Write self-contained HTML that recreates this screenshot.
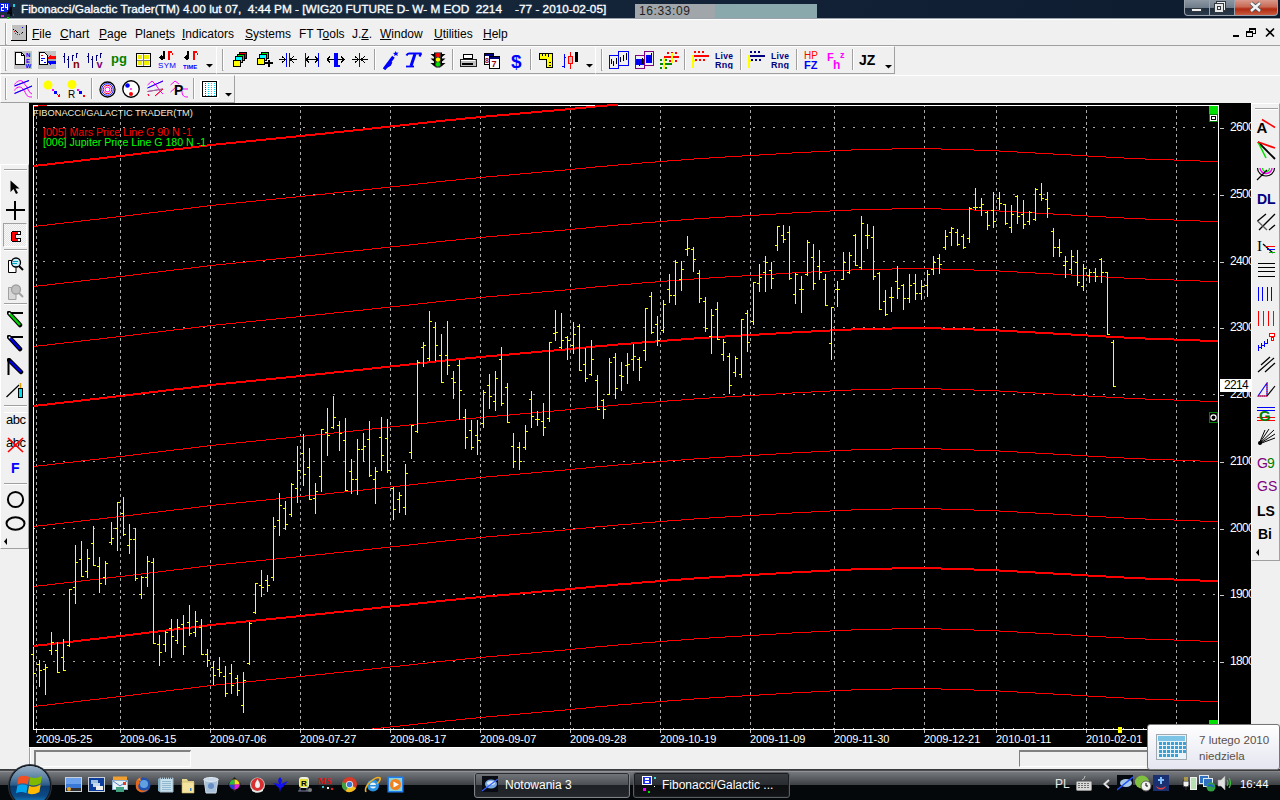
<!DOCTYPE html>
<html><head><meta charset="utf-8">
<style>
*{margin:0;padding:0;box-sizing:border-box}
html,body{width:1280px;height:800px;overflow:hidden;background:#f0f0f0;font-family:"Liberation Sans",sans-serif;position:relative}
.a{position:absolute}
#title{left:0;top:0;width:1280px;height:19px;background:linear-gradient(100deg,#1c2c3e 0%,#182839 28%,#142438 48%,#112035 70%,#0e1b2f 100%);border-bottom:1px solid #9aa3ac}
#ttext{left:21px;top:2px;font-size:11.8px;color:#fff;white-space:pre;letter-spacing:0;-webkit-text-stroke:0.3px #fff;text-shadow:0 0 3px #2a4a70}
#clock{left:635px;top:4px;width:182px;height:14px;background:#8aa9ad}
#clock1{left:0;top:0;width:80px;height:14px;background:#a1a6ab;font-size:12px;color:#1e1e1e;padding-left:4px;line-height:14px;letter-spacing:0.6px}
.wb{top:0;height:16px;border:1px solid #9aa3ad;border-top:none}
#menu{left:0;top:19px;width:1280px;height:27px;background:#f0f0f0;border-top:1px solid #fff;border-bottom:1px solid #a0a0a0}
.mi{top:27px;font-size:12px;color:#000;white-space:pre}
.mi u{text-decoration:underline;text-underline-offset:1px}
.tb{border-top:1px solid #fff;border-left:1px solid #fff;border-bottom:1px solid #a0a0a0;border-right:1px solid #a0a0a0}
.grip{width:2px;border-left:1px solid #a0a0a0;border-right:1px solid #fff}
.sep{width:2px;border-left:1px solid #a0a0a0;border-right:1px solid #fff}
.dl{position:absolute;top:733px;font-size:11px;color:#fff;white-space:pre}
.pl{position:absolute;left:1230px;font-size:12px;color:#fff;width:21px;letter-spacing:-0.7px;overflow:hidden;white-space:pre}
.ic{position:absolute}
</style></head><body>
<div id="title" class="a">
  <svg class="a" style="left:0;top:1px" width="18" height="18" shape-rendering="crispEdges"><rect x="0" y="2" width="9" height="9" fill="#1020e0"/><rect x="1" y="3" width="3" height="1" fill="#fff"/><rect x="3" y="4" width="1" height="2" fill="#fff"/><rect x="1" y="6" width="3" height="1" fill="#fff"/><rect x="1" y="7" width="1" height="2" fill="#fff"/><rect x="1" y="9" width="3" height="1" fill="#fff"/><rect x="5" y="3" width="1" height="4" fill="#fff"/><rect x="5" y="6" width="3" height="1" fill="#fff"/><rect x="7" y="3" width="1" height="6" fill="#fff"/><path d="M11 6 L8 12 H12 M11 6 V15" stroke="#000" stroke-width="1.5" fill="none" shape-rendering="auto"/><rect x="13" y="3" width="2" height="3" fill="#20d0e0"/><rect x="1" y="14" width="3" height="2" fill="#e020e0"/><rect x="7" y="16" width="2" height="2" fill="#20c020"/><rect x="13" y="13" width="1" height="2" fill="#c02020"/></svg>
  <div id="ttext" class="a">Fibonacci/Galactic Trader(TM) 4.00 lut 07,  4:44 PM - [WIG20 FUTURE D- W- M EOD  2214    -77 - 2010-02-05]</div>
  <div id="clock" class="a"><div id="clock1" class="a">16:33:09</div></div>
  <div class="a wb" style="left:1184px;width:26px;background:linear-gradient(#8d98a4 0%,#6f7c8a 50%,#1e2c3c 55%,#2b3a4c 100%);border-radius:0 0 0 4px"></div>
  <div class="a wb" style="left:1209px;width:26px;background:linear-gradient(#8d98a4 0%,#6f7c8a 50%,#1e2c3c 55%,#2b3a4c 100%)"></div>
  <div class="a wb" style="left:1234px;width:44px;background:linear-gradient(#d99a8c 0%,#c96a55 45%,#b02a10 60%,#c85a40 100%);border-radius:0 0 4px 0"></div>
  <svg class="a" style="left:1184px;top:0" width="96" height="17" shape-rendering="crispEdges"><rect x="7" y="8" width="11" height="4" fill="#303840"/><rect x="8" y="9" width="9" height="2" fill="#f0f0f0"/>
  <rect x="32" y="1" width="10" height="10" fill="#303840"/><rect x="33" y="2" width="8" height="8" fill="#f0f0f0"/><rect x="30" y="3" width="10" height="10" fill="#303840"/><rect x="31" y="4" width="8" height="8" fill="#e8e8e8"/><rect x="33" y="6" width="4" height="4" fill="#303840"/><rect x="34" y="7" width="2" height="2" fill="#f0f0f0"/>
  <path d="M67 3 L76 11 M76 3 L67 11" stroke="#505860" stroke-width="4.2" shape-rendering="auto"/><path d="M67 3 L76 11 M76 3 L67 11" stroke="#f4f4f4" stroke-width="2.4" shape-rendering="auto"/></svg>
</div>
<div id="menu" class="a">
<svg class="a" style="left:11px;top:5px" width="17" height="16" shape-rendering="crispEdges"><rect x="0" y="0" width="16" height="15" fill="#c0c0c0"/><rect x="15" y="0" width="1" height="16" fill="#000"/><rect x="0" y="15" width="16" height="1" fill="#000"/><rect x="0" y="0" width="1" height="15" fill="#fff"/><rect x="2" y="4" width="1" height="1" fill="#000"/><rect x="4" y="5" width="1" height="1" fill="#000"/><rect x="5" y="6" width="1" height="1" fill="#000"/><rect x="6" y="7" width="1" height="1" fill="#000"/><rect x="3" y="6" width="1" height="1" fill="#f00"/><rect x="4" y="8" width="1" height="1" fill="#f00"/><rect x="6" y="9" width="1" height="1" fill="#f00"/><rect x="8" y="9" width="1" height="1" fill="#f00"/><rect x="10" y="8" width="1" height="1" fill="#f00"/><rect x="11" y="7" width="1" height="1" fill="#000"/><rect x="11" y="2" width="1" height="1" fill="#00f"/></svg>
<div class="a" style="left:5px;top:3px;width:2px;height:22px;border-left:1px solid #a0a0a0;border-bottom:1px solid #a0a0a0;border-right:1px solid #fff"></div>
</div><div class="a mi" style="left:32px"><u>F</u>ile</div><div class="a mi" style="left:60px"><u>C</u>hart</div><div class="a mi" style="left:99px"><u>P</u>age</div><div class="a mi" style="left:135px">Plane<u>t</u>s</div><div class="a mi" style="left:182px"><u>I</u>ndicators</div><div class="a mi" style="left:245px"><u>S</u>ystems</div><div class="a mi" style="left:299px">FT T<u>o</u>ols</div><div class="a mi" style="left:352px">J.<u>Z</u>.</div><div class="a mi" style="left:380px"><u>W</u>indow</div><div class="a mi" style="left:434px"><u>U</u>tilities</div><div class="a mi" style="left:483px"><u>H</u>elp</div><svg class="ic" style="left:1230px;top:27px" width="50" height="12" viewBox="0 0 50 12" shape-rendering="crispEdges" ><rect x="3" y="8" width="6" height="2" fill="#000"/><rect x="19" y="1" width="7" height="6" fill="#000"/><rect x="20" y="3" width="5" height="3" fill="#f0f0f0"/><rect x="16" y="4" width="7" height="6" fill="#000"/><rect x="17" y="6" width="5" height="3" fill="#f0f0f0"/><path d="M36 1.5 L44 9.5 M44 1.5 L36 9.5" stroke="#000" stroke-width="1.6" shape-rendering="auto"/></svg><div class="a" style="left:0px;top:46px;width:217px;height:28px;border-left:1px solid #fff;border-top:1px solid #fff;border-right:1px solid #a0a0a0;border-bottom:1px solid #a0a0a0"></div><div class="a" style="left:216px;top:46px;width:380px;height:28px;border-left:1px solid #fff;border-top:1px solid #fff;border-right:1px solid #a0a0a0;border-bottom:1px solid #a0a0a0"></div><div class="a" style="left:595px;top:46px;width:300px;height:28px;border-left:1px solid #fff;border-top:1px solid #fff;border-right:1px solid #a0a0a0;border-bottom:1px solid #a0a0a0"></div><div class="a" style="left:0px;top:75px;width:235px;height:28px;border-left:1px solid #fff;border-top:1px solid #fff;border-right:1px solid #a0a0a0;border-bottom:1px solid #a0a0a0"></div><div class="a" style="left:5px;top:49px;width:2px;height:22px;border-left:1px solid #a0a0a0;border-right:1px solid #fff;border-bottom:1px solid #a0a0a0"></div><div class="a" style="left:222px;top:49px;width:2px;height:22px;border-left:1px solid #a0a0a0;border-right:1px solid #fff;border-bottom:1px solid #a0a0a0"></div><div class="a" style="left:601px;top:49px;width:2px;height:22px;border-left:1px solid #a0a0a0;border-right:1px solid #fff;border-bottom:1px solid #a0a0a0"></div><div class="a" style="left:5px;top:78px;width:2px;height:22px;border-left:1px solid #a0a0a0;border-right:1px solid #fff;border-bottom:1px solid #a0a0a0"></div><svg class="ic" style="left:14px;top:51px" width="18" height="18" viewBox="0 0 18 18" shape-rendering="crispEdges" ><rect x="0" y="0" width="18" height="18" fill="#c4c4c4"/><path d="M1.5 1.5 H7.5 L10.5 4.5 V13.5 H1.5 Z" fill="#fff" stroke="#000" stroke-width="1"/><path d="M7.5 1.5 V4.5 H10.5" fill="none" stroke="#000"/><text x="12" y="6" font-family="Liberation Sans" font-size="6" fill="#0000ff" font-weight="bold" font-style="" letter-spacing="0" shape-rendering="auto">N</text><text x="12" y="12" font-family="Liberation Sans" font-size="6" fill="#0000ff" font-weight="bold" font-style="" letter-spacing="0" shape-rendering="auto">E</text><text x="11.5" y="17" font-family="Liberation Sans" font-size="6" fill="#0000ff" font-weight="bold" font-style="" letter-spacing="0" shape-rendering="auto">W</text></svg><svg class="ic" style="left:38px;top:51px" width="18" height="18" viewBox="0 0 18 18" shape-rendering="crispEdges" ><rect x="0" y="0" width="18" height="18" fill="#c4c4c4"/><path d="M1.5 1.5 H6.5 L9.5 4.5 V13.5 H1.5 Z" fill="#fff" stroke="#000"/><rect x="3" y="4" width="2" height="1" fill="#f00"/><rect x="3" y="7" width="4" height="1" fill="#00f"/><rect x="3" y="9" width="2" height="1" fill="#00f"/><rect x="6" y="11" width="2" height="1" fill="#00f"/><path d="M10 6 L13 3 V5 H18 V8 H10 Z" fill="#f00"/><rect x="10" y="8" width="8" height="2" fill="#a8a8a8"/><path d="M10 10 H18 V13 H13 V15 L10 12 Z" fill="#00f"/></svg><svg class="ic" style="left:63px;top:52px" width="18" height="17" viewBox="0 0 18 17" shape-rendering="crispEdges" ><rect x="1" y="1" width="1" height="10" fill="#000080"/><rect x="0" y="4" width="1" height="1" fill="#000080"/><rect x="5" y="4" width="1" height="12" fill="#000080"/><rect x="4" y="7" width="1" height="1" fill="#000080"/><rect x="9" y="3" width="1" height="6" fill="#000080"/><rect x="10" y="3" width="1" height="1" fill="#000080"/><rect x="13" y="1" width="1" height="5" fill="#000080"/><rect x="14" y="1" width="1" height="1" fill="#000080"/><text x="10" y="16" font-family="Liberation Sans" font-size="11" fill="#800000" font-weight="bold" font-style="" letter-spacing="0" shape-rendering="auto">n</text></svg><svg class="ic" style="left:87px;top:52px" width="18" height="17" viewBox="0 0 18 17" shape-rendering="crispEdges" ><rect x="1" y="1" width="1" height="10" fill="#000080"/><rect x="0" y="4" width="1" height="1" fill="#000080"/><rect x="5" y="4" width="1" height="12" fill="#000080"/><rect x="4" y="7" width="1" height="1" fill="#000080"/><rect x="9" y="3" width="1" height="6" fill="#000080"/><rect x="10" y="3" width="1" height="1" fill="#000080"/><rect x="13" y="1" width="1" height="5" fill="#000080"/><rect x="14" y="1" width="1" height="1" fill="#000080"/><text x="9.5" y="16" font-family="Liberation Sans" font-size="11" fill="#800080" font-weight="bold" font-style="" letter-spacing="0" shape-rendering="auto">v</text></svg><svg class="ic" style="left:111px;top:51px" width="17" height="17" viewBox="0 0 17 17" shape-rendering="crispEdges" ><text x="0" y="12" font-family="Liberation Sans" font-size="13" fill="#008000" font-weight="bold" font-style="" letter-spacing="0" shape-rendering="auto">pg</text></svg><svg class="ic" style="left:136px;top:53px" width="15" height="14" viewBox="0 0 15 14" shape-rendering="crispEdges" ><rect x="0" y="0" width="15" height="14" fill="#000"/><rect x="1" y="1" width="13" height="12" fill="#f8f8f8"/><rect x="2" y="2" width="4" height="4" fill="#f0f000"/><rect x="8" y="2" width="5" height="4" fill="#f0f000"/><rect x="2" y="8" width="4" height="4" fill="#f0f000"/><rect x="8" y="8" width="5" height="4" fill="#f0f000"/><rect x="7" y="1" width="1" height="12" fill="#808080"/><rect x="1" y="7" width="13" height="1" fill="#808080"/></svg><svg class="ic" style="left:158px;top:51px" width="19" height="18" viewBox="0 0 19 18" shape-rendering="crispEdges" ><path d="M6 0 V8 M3 5 L6 8 M2 6 L5 9" stroke="#000" stroke-width="2" fill="none"/><rect x="10" y="0" width="2" height="9" fill="#f00"/><rect x="12" y="0" width="2" height="2" fill="#f00"/><rect x="14" y="2" width="1" height="2" fill="#f00"/><text x="0" y="17" font-family="Liberation Sans" font-size="8" fill="#0000ff" font-weight="normal" font-style="" letter-spacing="0.3" shape-rendering="auto">SYM</text></svg><svg class="ic" style="left:183px;top:51px" width="17" height="18" viewBox="0 0 17 18" shape-rendering="crispEdges" ><path d="M5 0 V8 M3 5 L6 8 M2 6 L5 9" stroke="#000" stroke-width="2" fill="none"/><rect x="10" y="0" width="2" height="9" fill="#f00"/><rect x="12" y="0" width="2" height="2" fill="#f00"/><rect x="14" y="2" width="1" height="2" fill="#f00"/><text x="0" y="17.5" font-family="Liberation Sans" font-size="6" fill="#0000ff" font-weight="bold" font-style="" letter-spacing="0" shape-rendering="auto">TIME</text></svg><svg class="ic" style="left:206px;top:64px" width="7" height="4" viewBox="0 0 7 4" shape-rendering="crispEdges" ><path d="M0 0 H7 L3.5 3.5 Z" fill="#000" shape-rendering="auto"/></svg><svg class="ic" style="left:232px;top:51px" width="17" height="17" viewBox="0 0 17 17" shape-rendering="crispEdges" ><rect x="7" y="1" width="8" height="7" fill="#000"/><rect x="8" y="2" width="6" height="5" fill="#e00000"/><rect x="5" y="3" width="8" height="7" fill="#000"/><rect x="6" y="4" width="6" height="5" fill="#00e000"/><rect x="3" y="5" width="8" height="7" fill="#000"/><rect x="4" y="6" width="6" height="5" fill="#00ffff"/><rect x="1" y="9" width="8" height="7" fill="#000"/><rect x="2" y="10" width="6" height="5" fill="#ffff00"/></svg><svg class="ic" style="left:256px;top:51px" width="18" height="17" viewBox="0 0 18 17" shape-rendering="crispEdges" ><rect x="5" y="1" width="8" height="7" fill="#000"/><rect x="6" y="2" width="6" height="5" fill="#00e000"/><rect x="3" y="3" width="8" height="7" fill="#000"/><rect x="4" y="4" width="6" height="5" fill="#00ffff"/><rect x="1" y="7" width="8" height="7" fill="#000"/><rect x="2" y="8" width="6" height="5" fill="#ffff00"/><rect x="12" y="9" width="2" height="7" fill="#000"/><rect x="9" y="11" width="8" height="2" fill="#000"/></svg><svg class="ic" style="left:279px;top:53px" width="18" height="14" viewBox="0 0 18 14" shape-rendering="crispEdges" ><path d="M0 6.5 H7 M3 3.5 L7 6.5 L3 9.5 M18 6.5 H11 M15 3.5 L11 6.5 L15 9.5" stroke="#000" fill="none"/><rect x="7" y="0" width="1" height="14" fill="#0000ff"/><rect x="10" y="0" width="1" height="14" fill="#0000ff"/></svg><svg class="ic" style="left:304px;top:53px" width="16" height="14" viewBox="0 0 16 14" shape-rendering="crispEdges" ><path d="M2 6.5 H14 M5 3.5 L2 6.5 L5 9.5 M11 3.5 L14 6.5 L11 9.5" stroke="#000" fill="none"/><rect x="1" y="0" width="1" height="14" fill="#0000ff"/><rect x="14" y="0" width="1" height="14" fill="#0000ff"/></svg><svg class="ic" style="left:327px;top:53px" width="18" height="15" viewBox="0 0 18 15" shape-rendering="crispEdges" ><path d="M0 6.5 H17 M3 3.5 L0 6.5 L3 9.5 M14 3.5 L17 6.5 L14 9.5" stroke="#000" fill="none"/><rect x="7" y="0" width="4" height="14" fill="#0000ff"/><rect x="11" y="12" width="2" height="2" fill="#0000ff"/></svg><svg class="ic" style="left:352px;top:53px" width="16" height="15" viewBox="0 0 16 15" shape-rendering="crispEdges" ><path d="M0 6.5 H16 M3 3.5 L7 6.5 L3 9.5 M13 3.5 L9 6.5 L13 9.5" stroke="#000" fill="none"/><rect x="7" y="0" width="1" height="14" fill="#0000ff"/></svg><div class="a" style="left:374px;top:49px;width:2px;height:21px;border-left:1px solid #a0a0a0;border-right:1px solid #fff"></div><svg class="ic" style="left:383px;top:50px" width="16" height="20" viewBox="0 0 16 20" shape-rendering="auto"><path d="M9.5 8 L2 18" stroke="#0000ff" stroke-width="3.2" stroke-linecap="square"/><path d="M2 18 L7 15 L8.5 12" stroke="#0000ff" stroke-width="2" fill="none"/><path d="M12.5 1 L13.6 2.8 L15.6 2.6 L14.2 4 L14.8 6 L12.8 5 L11.2 6.2 L11.5 4.2 L10 3 L12 2.8 Z" fill="#0000ff"/></svg><svg class="ic" style="left:405px;top:52px" width="18" height="16" viewBox="0 0 18 16" shape-rendering="auto"><path d="M1.5 3.5 Q2.5 1.5 4 1.5 H16.5 Q15.5 2 14.5 4.5" stroke="#0000ff" stroke-width="2.2" fill="none"/><path d="M10 2 L6 14" stroke="#0000ff" stroke-width="3"/><path d="M1 14.5 H9" stroke="#0000ff" stroke-width="1.8"/></svg><svg class="ic" style="left:430px;top:52px" width="16" height="16" viewBox="0 0 16 16" shape-rendering="auto"><path d="M4 0.5 H12 V2 L15.5 2 L12 5 V6.5 L15.5 6.5 L12 9.5 V11 L15.5 11 L12 14 L10 15.5 H6 L4 14 L0.5 11 L4 11 V9.5 L0.5 6.5 L4 6.5 V5 L0.5 2 L4 2 Z" fill="#000"/><rect x="5" y="1" width="6" height="14" fill="#303030"/><circle cx="8" cy="3" r="2.2" fill="#ff0000"/><circle cx="8" cy="7.6" r="2.2" fill="#ffff00"/><circle cx="8" cy="12.2" r="2.2" fill="#00e000"/></svg><div class="a" style="left:452px;top:49px;width:2px;height:21px;border-left:1px solid #a0a0a0;border-right:1px solid #fff"></div><svg class="ic" style="left:459px;top:53px" width="18" height="15" viewBox="0 0 18 15" shape-rendering="crispEdges" ><rect x="4" y="1" width="9" height="4" fill="#fff" stroke="#000"/><path d="M1 6 H17 V13 H1 Z" fill="#c0c0c0" stroke="#202020"/><rect x="3" y="10" width="11" height="2" fill="#000"/><rect x="2" y="7" width="14" height="1" fill="#fff"/></svg><svg class="ic" style="left:484px;top:52px" width="17" height="18" viewBox="0 0 17 18" shape-rendering="crispEdges" ><rect x="0.5" y="1.5" width="9" height="11" fill="#fff" stroke="#000"/><rect x="1" y="2" width="8" height="2" fill="#000080"/><rect x="5.5" y="4.5" width="10" height="12" fill="#fff" stroke="#000"/><rect x="6" y="5" width="9" height="2" fill="#000080"/><text x="7.5" y="15" font-family="Liberation Sans" font-size="9" fill="#a00000" font-weight="bold" font-style="" letter-spacing="0" shape-rendering="auto">7</text><text x="1" y="11" font-family="Liberation Sans" font-size="7" fill="#a00000" font-weight="bold" font-style="" letter-spacing="0" shape-rendering="auto">8</text></svg><svg class="ic" style="left:511px;top:52px" width="12" height="18" viewBox="0 0 12 18" shape-rendering="crispEdges" ><text x="0" y="16" font-family="Liberation Sans" font-size="19" fill="#0000ff" font-weight="bold" font-style="" letter-spacing="0" shape-rendering="auto">$</text></svg><div class="a" style="left:530px;top:49px;width:2px;height:21px;border-left:1px solid #a0a0a0;border-right:1px solid #fff"></div><svg class="ic" style="left:539px;top:53px" width="14" height="15" viewBox="0 0 14 15" shape-rendering="crispEdges" ><path d="M0.5 0.5 H13.5 V14.5 H7.5 V6.5 H0.5 Z" fill="#ffff00" stroke="#000"/><rect x="3" y="1" width="1" height="2" fill="#000"/><rect x="6" y="1" width="1" height="2" fill="#000"/><rect x="9" y="1" width="1" height="3" fill="#000"/><rect x="10" y="9" width="2" height="1" fill="#000"/><rect x="10" y="12" width="2" height="1" fill="#000"/></svg><svg class="ic" style="left:562px;top:51px" width="18" height="19" viewBox="0 0 18 19" shape-rendering="crispEdges" ><rect x="2" y="3" width="1" height="14" fill="#0000ff"/><rect x="0" y="15" width="2" height="1" fill="#0000ff"/><rect x="3" y="6" width="1" height="1" fill="#0000ff"/><rect x="8" y="1" width="1" height="17" fill="#f00"/><rect x="6.5" y="5.5" width="4" height="7" fill="#c0c0c0" stroke="#f00"/><rect x="13" y="1" width="3" height="10" fill="#000"/></svg><svg class="ic" style="left:586px;top:64px" width="7" height="4" viewBox="0 0 7 4" shape-rendering="crispEdges" ><path d="M0 0 H7 L3.5 3.5 Z" fill="#000" shape-rendering="auto"/></svg><svg class="ic" style="left:609px;top:51px" width="21" height="19" viewBox="0 0 21 19" shape-rendering="crispEdges" ><rect x="0.5" y="4.5" width="9" height="13" fill="#f0f0f0" stroke="#0000ff"/><rect x="9.5" y="0.5" width="10" height="14" fill="#f0f0f0" stroke="#0000ff"/><rect x="2" y="8" width="1" height="5" fill="#000"/><rect x="4" y="10" width="1" height="5" fill="#000"/><rect x="7" y="7" width="1" height="6" fill="#000"/><rect x="11" y="6" width="1" height="5" fill="#000"/><rect x="14" y="4" width="1" height="6" fill="#000"/><rect x="17" y="2" width="1" height="7" fill="#000"/></svg><svg class="ic" style="left:635px;top:51px" width="20" height="19" viewBox="0 0 20 19" shape-rendering="crispEdges" ><rect x="0.5" y="4.5" width="9" height="13" fill="#f0f0f0" stroke="#800080"/><rect x="9.5" y="0.5" width="9" height="14" fill="#f0f0f0" stroke="#800080"/><rect x="1" y="8" width="8" height="6" fill="#0000ff"/><rect x="11" y="4" width="6" height="8" fill="#0000ff"/><rect x="2" y="8" width="1" height="5" fill="#000"/><rect x="4" y="10" width="1" height="5" fill="#000"/><rect x="7" y="7" width="1" height="6" fill="#000"/><rect x="12" y="6" width="1" height="5" fill="#000"/><rect x="14" y="4" width="1" height="6" fill="#000"/><rect x="16" y="2" width="1" height="7" fill="#000"/></svg><svg class="ic" style="left:660px;top:52px" width="19" height="17" viewBox="0 0 19 17" shape-rendering="crispEdges" ><rect x="7" y="0" width="2" height="2" fill="#f00"/><rect x="11" y="0" width="2" height="2" fill="#f00"/><rect x="15" y="0" width="2" height="2" fill="#f00"/><rect x="4" y="4" width="15" height="2" fill="#f00"/><rect x="9" y="8" width="2" height="2" fill="#f00"/><rect x="15" y="8" width="2" height="2" fill="#f00"/><rect x="11" y="1" width="2" height="10" fill="#ff0"/><rect x="0" y="7" width="2" height="2" fill="#080"/><rect x="5" y="7" width="2" height="2" fill="#080"/><rect x="0" y="11" width="12" height="2" fill="#080"/><rect x="0" y="15" width="2" height="2" fill="#080"/><rect x="5" y="15" width="2" height="2" fill="#080"/><rect x="3" y="6" width="2" height="11" fill="#ff0"/></svg><div class="a" style="left:684px;top:49px;width:2px;height:21px;border-left:1px solid #a0a0a0;border-right:1px solid #fff"></div><svg class="ic" style="left:692px;top:51px" width="18" height="17" viewBox="0 0 18 17" shape-rendering="crispEdges" ><rect x="2" y="0" width="2" height="2" fill="#ff0000"/><rect x="6" y="0" width="2" height="2" fill="#ff0000"/><rect x="10" y="0" width="2" height="2" fill="#ff0000"/><rect x="1" y="4" width="16" height="2" fill="#ff0000"/><rect x="3" y="8" width="2" height="2" fill="#ff0000"/><rect x="7" y="8" width="2" height="2" fill="#ff0000"/><rect x="11" y="8" width="2" height="2" fill="#ff0000"/><rect x="0" y="4" width="2" height="13" fill="#ffff00"/><rect x="2" y="9" width="1" height="2" fill="#ffff00"/></svg><svg class="ic" style="left:715px;top:51px" width="20" height="18" viewBox="0 0 20 18" shape-rendering="crispEdges" ><text x="0" y="7.5" font-family="Liberation Sans" font-size="8.5" fill="#000080" font-weight="bold" font-style="" letter-spacing="0.3" shape-rendering="auto">Live</text><text x="0" y="17" font-family="Liberation Sans" font-size="9" fill="#000080" font-weight="bold" font-style="" letter-spacing="0.2" shape-rendering="auto">Rng</text></svg><div class="a" style="left:740px;top:49px;width:2px;height:21px;border-left:1px solid #a0a0a0;border-right:1px solid #fff"></div><svg class="ic" style="left:748px;top:51px" width="18" height="17" viewBox="0 0 18 17" shape-rendering="crispEdges" ><rect x="2" y="0" width="2" height="2" fill="#000080"/><rect x="6" y="0" width="2" height="2" fill="#000080"/><rect x="10" y="0" width="2" height="2" fill="#000080"/><rect x="1" y="4" width="16" height="2" fill="#000080"/><rect x="3" y="8" width="2" height="2" fill="#000080"/><rect x="7" y="8" width="2" height="2" fill="#000080"/><rect x="11" y="8" width="2" height="2" fill="#000080"/><rect x="0" y="4" width="2" height="13" fill="#ffff00"/><rect x="2" y="9" width="1" height="2" fill="#ffff00"/></svg><svg class="ic" style="left:771px;top:51px" width="20" height="18" viewBox="0 0 20 18" shape-rendering="crispEdges" ><text x="0" y="7.5" font-family="Liberation Sans" font-size="8.5" fill="#000080" font-weight="bold" font-style="" letter-spacing="0.3" shape-rendering="auto">Live</text><text x="0" y="17" font-family="Liberation Sans" font-size="9" fill="#000080" font-weight="bold" font-style="" letter-spacing="0.2" shape-rendering="auto">Rng</text></svg><div class="a" style="left:796px;top:49px;width:2px;height:21px;border-left:1px solid #a0a0a0;border-right:1px solid #fff"></div><svg class="ic" style="left:804px;top:50px" width="17" height="20" viewBox="0 0 17 20" shape-rendering="crispEdges" ><text x="0" y="8.5" font-family="Liberation Sans" font-size="10" fill="#ff0000" font-weight="normal" font-style="" letter-spacing="0" shape-rendering="auto">HP</text><text x="0" y="18.5" font-family="Liberation Sans" font-size="11" fill="#0000ff" font-weight="bold" font-style="" letter-spacing="0" shape-rendering="auto">FZ</text></svg><svg class="ic" style="left:827px;top:50px" width="20" height="20" viewBox="0 0 20 20" shape-rendering="crispEdges" ><text x="0" y="11" font-family="Liberation Sans" font-size="11" fill="#ff00ff" font-weight="bold" font-style="" letter-spacing="0" shape-rendering="auto">F</text><text x="6" y="19" font-family="Liberation Sans" font-size="12" fill="#ff00ff" font-weight="bold" font-style="" letter-spacing="0" shape-rendering="auto">h</text><text x="13" y="8" font-family="Liberation Sans" font-size="9" fill="#ff00ff" font-weight="bold" font-style="" letter-spacing="0" shape-rendering="auto">z</text></svg><div class="a" style="left:852px;top:49px;width:2px;height:21px;border-left:1px solid #a0a0a0;border-right:1px solid #fff"></div><svg class="ic" style="left:859px;top:53px" width="18" height="14" viewBox="0 0 18 14" shape-rendering="crispEdges" ><text x="0" y="12" font-family="Liberation Sans" font-size="14" fill="#000" font-weight="bold" font-style="" letter-spacing="0" shape-rendering="auto">JZ</text></svg><svg class="ic" style="left:885px;top:65px" width="7" height="4" viewBox="0 0 7 4" shape-rendering="crispEdges" ><path d="M0 0 H7 L3.5 3.5 Z" fill="#000" shape-rendering="auto"/></svg><svg class="ic" style="left:14px;top:80px" width="19" height="18" viewBox="0 0 19 18" shape-rendering="crispEdges" ><path d="M0.5 4.5 C3 1 6 0 8 1 C10 3 11 5 13 7 C14 9 15 13 18 14 M0.5 10.5 C2 7 6 6 8 8 C10 10 11 12 12 14 C13 16 14 17 18 17 M0.5 6 L15 0.5 M0.5 13.5 L18 6" stroke="#ff00ff" fill="none" shape-rendering="auto"/><path d="M0.5 6 L15 0.5 M0.5 13.5 L18 6" stroke="#0000ff" fill="none" stroke-width="1.1" shape-rendering="auto"/></svg><div class="a" style="left:37px;top:78px;width:2px;height:21px;border-left:1px solid #a0a0a0;border-right:1px solid #fff"></div><svg class="ic" style="left:43px;top:80px" width="19" height="18" viewBox="0 0 19 18" shape-rendering="crispEdges" ><circle cx="5" cy="5" r="4.5" fill="#ffff00" shape-rendering="auto"/><rect x="9" y="9" width="2" height="2" fill="#ff00ff"/><rect x="11" y="11" width="3" height="3" fill="#0000ff"/><rect x="15" y="15" width="2" height="2" fill="#ff0000"/><rect x="14" y="14" width="1" height="1" fill="#f00"/><rect x="16" y="14" width="1" height="1" fill="#f00"/></svg><svg class="ic" style="left:67px;top:80px" width="19" height="19" viewBox="0 0 19 19" shape-rendering="crispEdges" ><circle cx="5" cy="4.5" r="4.5" fill="#ffff00" shape-rendering="auto"/><text x="1" y="17.5" font-family="Liberation Sans" font-size="10" fill="#000" font-weight="normal" font-style="" letter-spacing="0" shape-rendering="auto">R</text><rect x="10" y="9" width="2" height="2" fill="#ff00ff"/><rect x="12" y="11" width="3" height="3" fill="#0000ff"/><rect x="16" y="15" width="2" height="2" fill="#ff0000"/></svg><div class="a" style="left:91px;top:78px;width:2px;height:21px;border-left:1px solid #a0a0a0;border-right:1px solid #fff"></div><svg class="ic" style="left:99px;top:81px" width="17" height="17" viewBox="0 0 17 17" shape-rendering="auto"><circle cx="8.5" cy="8.5" r="7.5" fill="#fff" stroke="#000" stroke-width="1.3"/><circle cx="8.5" cy="8.5" r="5.8" fill="none" stroke="#0000ff"/><circle cx="8.5" cy="8.5" r="4.2" fill="none" stroke="#ff0000"/><circle cx="8.5" cy="8.5" r="2.5" fill="none" stroke="#ff00ff"/></svg><svg class="ic" style="left:122px;top:80px" width="19" height="19" viewBox="0 0 19 19" shape-rendering="auto"><circle cx="9" cy="9" r="8.2" fill="#fff" stroke="#000" stroke-width="1.4"/><circle cx="5.5" cy="5.5" r="2.3" fill="#0000ff"/><circle cx="9" cy="14" r="2" fill="#ff0000"/><circle cx="9" cy="9" r="0.9" fill="#ff00ff"/></svg><svg class="ic" style="left:147px;top:80px" width="17" height="18" viewBox="0 0 17 18" shape-rendering="auto"><path d="M0.5 5 L5 1 L9 5 L13 11 L16 14 M0.5 8 L16 1 M0.5 11.5 L16 9 M1 14 L2 16 M8 16 L16 9" stroke="#ff00ff" fill="none"/><path d="M0.5 8 L16 1" stroke="#0000ff"/><path d="M0.5 11.5 L16 9" stroke="#808080"/><path d="M1 14 L2 16 M8 16 L16 9" stroke="#ff0000"/></svg><svg class="ic" style="left:170px;top:80px" width="19" height="19" viewBox="0 0 19 19" shape-rendering="crispEdges" ><path d="M0.5 5 L5 1 L9 4 M0.5 12 L6 7 M13 9 L18 9 M12 11 C12 16 14 17 18 17" stroke="#ff00ff" fill="none" shape-rendering="auto"/><text x="4" y="15" font-family="Liberation Sans" font-size="14" fill="#000" font-weight="bold" font-style="" letter-spacing="0" shape-rendering="auto">P</text></svg><div class="a" style="left:193px;top:78px;width:2px;height:21px;border-left:1px solid #a0a0a0;border-right:1px solid #fff"></div><svg class="ic" style="left:200px;top:80px" width="19" height="18" viewBox="0 0 19 18" shape-rendering="crispEdges" ><rect x="0" y="0" width="19" height="18" fill="#fff"/><rect x="2" y="1" width="15" height="16" fill="#000"/><rect x="3" y="2" width="13" height="14" fill="#fff"/><rect x="5" y="3" width="1" height="1" fill="#ff0000"/><rect x="5" y="5" width="1" height="1" fill="#ff0000"/><rect x="5" y="7" width="1" height="1" fill="#ff0000"/><rect x="5" y="9" width="1" height="1" fill="#ff0000"/><rect x="5" y="11" width="1" height="1" fill="#ff0000"/><rect x="5" y="13" width="1" height="1" fill="#ff0000"/><rect x="5" y="15" width="1" height="1" fill="#ff0000"/><rect x="8" y="3" width="1" height="1" fill="#00e0ff"/><rect x="8" y="5" width="1" height="1" fill="#00e0ff"/><rect x="8" y="7" width="1" height="1" fill="#00e0ff"/><rect x="8" y="9" width="1" height="1" fill="#00e0ff"/><rect x="8" y="11" width="1" height="1" fill="#00e0ff"/><rect x="8" y="13" width="1" height="1" fill="#00e0ff"/><rect x="8" y="15" width="1" height="1" fill="#00e0ff"/><rect x="11" y="3" width="1" height="1" fill="#00e0ff"/><rect x="11" y="5" width="1" height="1" fill="#00e0ff"/><rect x="11" y="7" width="1" height="1" fill="#00e0ff"/><rect x="11" y="9" width="1" height="1" fill="#00e0ff"/><rect x="11" y="11" width="1" height="1" fill="#00e0ff"/><rect x="11" y="13" width="1" height="1" fill="#00e0ff"/><rect x="11" y="15" width="1" height="1" fill="#00e0ff"/><rect x="14" y="3" width="1" height="1" fill="#00e0ff"/><rect x="14" y="5" width="1" height="1" fill="#00e0ff"/><rect x="14" y="7" width="1" height="1" fill="#00e0ff"/><rect x="14" y="9" width="1" height="1" fill="#00e0ff"/><rect x="14" y="11" width="1" height="1" fill="#00e0ff"/><rect x="14" y="13" width="1" height="1" fill="#00e0ff"/><rect x="14" y="15" width="1" height="1" fill="#00e0ff"/><rect x="2" y="3" width="1" height="1" fill="#000"/><rect x="2" y="5" width="1" height="1" fill="#000"/><rect x="2" y="7" width="1" height="1" fill="#000"/><rect x="2" y="9" width="1" height="1" fill="#000"/><rect x="2" y="11" width="1" height="1" fill="#000"/><rect x="2" y="13" width="1" height="1" fill="#000"/><rect x="2" y="15" width="1" height="1" fill="#000"/></svg><svg class="ic" style="left:225px;top:93px" width="7" height="4" viewBox="0 0 7 4" shape-rendering="crispEdges" ><path d="M0 0 H7 L3.5 3.5 Z" fill="#000" shape-rendering="auto"/></svg><div class="a" style="left:235px;top:75px;width:1045px;height:28px;border-top:1px solid #fff"></div>
<svg width="1280" height="800" style="position:absolute;left:0;top:0" shape-rendering="crispEdges"><rect x="29" y="103" width="1222" height="644" fill="#000"/><line x1="36.5" y1="106" x2="36.5" y2="729" stroke="#a8a8a8" stroke-dasharray="3 3" stroke-dashoffset="2"/><line x1="120.5" y1="106" x2="120.5" y2="729" stroke="#a8a8a8" stroke-dasharray="3 3" stroke-dashoffset="2"/><line x1="210.5" y1="106" x2="210.5" y2="729" stroke="#a8a8a8" stroke-dasharray="3 3" stroke-dashoffset="2"/><line x1="300.5" y1="106" x2="300.5" y2="729" stroke="#a8a8a8" stroke-dasharray="3 3" stroke-dashoffset="2"/><line x1="390.5" y1="106" x2="390.5" y2="729" stroke="#a8a8a8" stroke-dasharray="3 3" stroke-dashoffset="2"/><line x1="480.5" y1="106" x2="480.5" y2="729" stroke="#a8a8a8" stroke-dasharray="3 3" stroke-dashoffset="2"/><line x1="570.5" y1="106" x2="570.5" y2="729" stroke="#a8a8a8" stroke-dasharray="3 3" stroke-dashoffset="2"/><line x1="660.5" y1="106" x2="660.5" y2="729" stroke="#a8a8a8" stroke-dasharray="3 3" stroke-dashoffset="2"/><line x1="750.5" y1="106" x2="750.5" y2="729" stroke="#a8a8a8" stroke-dasharray="3 3" stroke-dashoffset="2"/><line x1="834.5" y1="106" x2="834.5" y2="729" stroke="#a8a8a8" stroke-dasharray="3 3" stroke-dashoffset="2"/><line x1="924.5" y1="106" x2="924.5" y2="729" stroke="#a8a8a8" stroke-dasharray="3 3" stroke-dashoffset="2"/><line x1="996.5" y1="106" x2="996.5" y2="729" stroke="#a8a8a8" stroke-dasharray="3 3" stroke-dashoffset="2"/><line x1="1086.5" y1="106" x2="1086.5" y2="729" stroke="#a8a8a8" stroke-dasharray="3 3" stroke-dashoffset="2"/><line x1="1176.5" y1="106" x2="1176.5" y2="729" stroke="#a8a8a8" stroke-dasharray="3 3" stroke-dashoffset="2"/><line x1="34" y1="127.5" x2="1218" y2="127.5" stroke="#a8a8a8" stroke-dasharray="2 8" stroke-dashoffset="1"/><line x1="34" y1="194.5" x2="1218" y2="194.5" stroke="#a8a8a8" stroke-dasharray="2 8" stroke-dashoffset="1"/><line x1="34" y1="261.5" x2="1218" y2="261.5" stroke="#a8a8a8" stroke-dasharray="2 8" stroke-dashoffset="1"/><line x1="34" y1="327.5" x2="1218" y2="327.5" stroke="#a8a8a8" stroke-dasharray="2 8" stroke-dashoffset="1"/><line x1="34" y1="394.5" x2="1218" y2="394.5" stroke="#a8a8a8" stroke-dasharray="2 8" stroke-dashoffset="1"/><line x1="34" y1="461.5" x2="1218" y2="461.5" stroke="#a8a8a8" stroke-dasharray="2 8" stroke-dashoffset="1"/><line x1="34" y1="528.5" x2="1218" y2="528.5" stroke="#a8a8a8" stroke-dasharray="2 8" stroke-dashoffset="1"/><line x1="34" y1="594.5" x2="1218" y2="594.5" stroke="#a8a8a8" stroke-dasharray="2 8" stroke-dashoffset="1"/><line x1="34" y1="661.5" x2="1218" y2="661.5" stroke="#a8a8a8" stroke-dasharray="2 8" stroke-dashoffset="1"/><rect x="33" y="105" width="1186" height="1" fill="#fff"/><rect x="33" y="105" width="1" height="625" fill="#fff"/><rect x="1218" y="105" width="1" height="625" fill="#fff"/><rect x="33" y="729" width="1186" height="1" fill="#fff"/><g fill="#ff0000"><rect x="34" y="106" width="4" height="1"/><rect x="38" y="105" width="9" height="1"/><rect x="33" y="165" width="5" height="2"/><rect x="38" y="164" width="9" height="2"/><rect x="47" y="163" width="8" height="2"/><rect x="55" y="162" width="9" height="2"/><rect x="64" y="161" width="9" height="2"/><rect x="73" y="160" width="8" height="2"/><rect x="81" y="159" width="9" height="2"/><rect x="90" y="158" width="9" height="2"/><rect x="99" y="157" width="8" height="2"/><rect x="107" y="156" width="9" height="2"/><rect x="116" y="155" width="9" height="2"/><rect x="125" y="154" width="8" height="2"/><rect x="133" y="153" width="8" height="2"/><rect x="141" y="152" width="8" height="2"/><rect x="149" y="151" width="9" height="2"/><rect x="158" y="150" width="8" height="2"/><rect x="166" y="149" width="8" height="2"/><rect x="174" y="148" width="9" height="2"/><rect x="183" y="147" width="8" height="2"/><rect x="191" y="146" width="8" height="2"/><rect x="199" y="145" width="8" height="2"/><rect x="207" y="144" width="9" height="2"/><rect x="216" y="143" width="10" height="2"/><rect x="226" y="142" width="10" height="2"/><rect x="236" y="141" width="10" height="2"/><rect x="246" y="140" width="10" height="2"/><rect x="256" y="139" width="10" height="2"/><rect x="266" y="138" width="10" height="2"/><rect x="276" y="137" width="10" height="2"/><rect x="286" y="136" width="10" height="2"/><rect x="296" y="135" width="9" height="2"/><rect x="305" y="134" width="10" height="2"/><rect x="315" y="133" width="10" height="2"/><rect x="325" y="132" width="9" height="2"/><rect x="334" y="131" width="10" height="2"/><rect x="344" y="130" width="9" height="2"/><rect x="353" y="129" width="10" height="2"/><rect x="363" y="128" width="9" height="2"/><rect x="372" y="127" width="9" height="2"/><rect x="381" y="126" width="9" height="2"/><rect x="390" y="125" width="10" height="2"/><rect x="400" y="124" width="9" height="2"/><rect x="409" y="123" width="9" height="2"/><rect x="418" y="122" width="9" height="2"/><rect x="427" y="121" width="9" height="2"/><rect x="436" y="120" width="9" height="2"/><rect x="445" y="119" width="11" height="2"/><rect x="456" y="118" width="9" height="2"/><rect x="465" y="117" width="11" height="2"/><rect x="476" y="116" width="10" height="2"/><rect x="486" y="115" width="11" height="2"/><rect x="497" y="114" width="12" height="2"/><rect x="509" y="113" width="11" height="2"/><rect x="520" y="112" width="11" height="2"/><rect x="531" y="111" width="11" height="2"/><rect x="542" y="110" width="12" height="2"/><rect x="554" y="109" width="11" height="2"/><rect x="565" y="108" width="10" height="2"/><rect x="575" y="107" width="11" height="2"/><rect x="586" y="106" width="9" height="2"/><rect x="595" y="105" width="12" height="2"/><rect x="607" y="104" width="11" height="2"/><rect x="34" y="226" width="4" height="1"/><rect x="38" y="225" width="9" height="1"/><rect x="47" y="224" width="8" height="1"/><rect x="55" y="223" width="9" height="1"/><rect x="64" y="222" width="9" height="1"/><rect x="73" y="221" width="8" height="1"/><rect x="81" y="220" width="9" height="1"/><rect x="90" y="219" width="9" height="1"/><rect x="99" y="218" width="8" height="1"/><rect x="107" y="217" width="9" height="1"/><rect x="116" y="216" width="9" height="1"/><rect x="125" y="215" width="8" height="1"/><rect x="133" y="214" width="8" height="1"/><rect x="141" y="213" width="8" height="1"/><rect x="149" y="212" width="9" height="1"/><rect x="158" y="211" width="8" height="1"/><rect x="166" y="210" width="8" height="1"/><rect x="174" y="209" width="9" height="1"/><rect x="183" y="208" width="8" height="1"/><rect x="191" y="207" width="8" height="1"/><rect x="199" y="206" width="8" height="1"/><rect x="207" y="205" width="9" height="1"/><rect x="216" y="204" width="10" height="1"/><rect x="226" y="203" width="10" height="1"/><rect x="236" y="202" width="10" height="1"/><rect x="246" y="201" width="10" height="1"/><rect x="256" y="200" width="10" height="1"/><rect x="266" y="199" width="10" height="1"/><rect x="276" y="198" width="10" height="1"/><rect x="286" y="197" width="10" height="1"/><rect x="296" y="196" width="9" height="1"/><rect x="305" y="195" width="10" height="1"/><rect x="315" y="194" width="10" height="1"/><rect x="325" y="193" width="9" height="1"/><rect x="334" y="192" width="10" height="1"/><rect x="344" y="191" width="9" height="1"/><rect x="353" y="190" width="10" height="1"/><rect x="363" y="189" width="9" height="1"/><rect x="372" y="188" width="9" height="1"/><rect x="381" y="187" width="9" height="1"/><rect x="390" y="186" width="10" height="1"/><rect x="400" y="185" width="9" height="1"/><rect x="409" y="184" width="9" height="1"/><rect x="418" y="183" width="9" height="1"/><rect x="427" y="182" width="9" height="1"/><rect x="436" y="181" width="9" height="1"/><rect x="445" y="180" width="11" height="1"/><rect x="456" y="179" width="9" height="1"/><rect x="465" y="178" width="11" height="1"/><rect x="476" y="177" width="10" height="1"/><rect x="486" y="176" width="11" height="1"/><rect x="497" y="175" width="12" height="1"/><rect x="509" y="174" width="11" height="1"/><rect x="520" y="173" width="11" height="1"/><rect x="531" y="172" width="11" height="1"/><rect x="542" y="171" width="12" height="1"/><rect x="554" y="170" width="11" height="1"/><rect x="565" y="169" width="10" height="1"/><rect x="575" y="168" width="11" height="1"/><rect x="586" y="167" width="9" height="1"/><rect x="595" y="166" width="12" height="1"/><rect x="607" y="165" width="11" height="1"/><rect x="618" y="164" width="13" height="1"/><rect x="631" y="163" width="11" height="1"/><rect x="642" y="162" width="13" height="1"/><rect x="655" y="161" width="12" height="1"/><rect x="667" y="160" width="14" height="1"/><rect x="681" y="159" width="13" height="1"/><rect x="694" y="158" width="15" height="1"/><rect x="709" y="157" width="16" height="1"/><rect x="725" y="156" width="17" height="1"/><rect x="742" y="155" width="17" height="1"/><rect x="759" y="154" width="17" height="1"/><rect x="776" y="153" width="16" height="1"/><rect x="792" y="152" width="19" height="1"/><rect x="811" y="151" width="19" height="1"/><rect x="830" y="150" width="21" height="1"/><rect x="851" y="149" width="41" height="1"/><rect x="892" y="148" width="49" height="1"/><rect x="941" y="149" width="33" height="1"/><rect x="974" y="150" width="25" height="1"/><rect x="999" y="151" width="18" height="1"/><rect x="1017" y="152" width="18" height="1"/><rect x="1035" y="153" width="18" height="1"/><rect x="1053" y="154" width="18" height="1"/><rect x="1071" y="155" width="17" height="1"/><rect x="1088" y="156" width="18" height="1"/><rect x="1106" y="157" width="18" height="1"/><rect x="1124" y="158" width="21" height="1"/><rect x="1145" y="159" width="29" height="1"/><rect x="1174" y="160" width="26" height="1"/><rect x="1200" y="161" width="18" height="1"/><rect x="34" y="286" width="4" height="1"/><rect x="38" y="285" width="9" height="1"/><rect x="47" y="284" width="8" height="1"/><rect x="55" y="283" width="9" height="1"/><rect x="64" y="282" width="9" height="1"/><rect x="73" y="281" width="8" height="1"/><rect x="81" y="280" width="9" height="1"/><rect x="90" y="279" width="9" height="1"/><rect x="99" y="278" width="8" height="1"/><rect x="107" y="277" width="9" height="1"/><rect x="116" y="276" width="9" height="1"/><rect x="125" y="275" width="8" height="1"/><rect x="133" y="274" width="8" height="1"/><rect x="141" y="273" width="8" height="1"/><rect x="149" y="272" width="9" height="1"/><rect x="158" y="271" width="8" height="1"/><rect x="166" y="270" width="8" height="1"/><rect x="174" y="269" width="9" height="1"/><rect x="183" y="268" width="8" height="1"/><rect x="191" y="267" width="8" height="1"/><rect x="199" y="266" width="8" height="1"/><rect x="207" y="265" width="9" height="1"/><rect x="216" y="264" width="10" height="1"/><rect x="226" y="263" width="10" height="1"/><rect x="236" y="262" width="10" height="1"/><rect x="246" y="261" width="10" height="1"/><rect x="256" y="260" width="10" height="1"/><rect x="266" y="259" width="10" height="1"/><rect x="276" y="258" width="10" height="1"/><rect x="286" y="257" width="10" height="1"/><rect x="296" y="256" width="9" height="1"/><rect x="305" y="255" width="10" height="1"/><rect x="315" y="254" width="10" height="1"/><rect x="325" y="253" width="9" height="1"/><rect x="334" y="252" width="10" height="1"/><rect x="344" y="251" width="9" height="1"/><rect x="353" y="250" width="10" height="1"/><rect x="363" y="249" width="9" height="1"/><rect x="372" y="248" width="9" height="1"/><rect x="381" y="247" width="9" height="1"/><rect x="390" y="246" width="10" height="1"/><rect x="400" y="245" width="9" height="1"/><rect x="409" y="244" width="9" height="1"/><rect x="418" y="243" width="9" height="1"/><rect x="427" y="242" width="9" height="1"/><rect x="436" y="241" width="9" height="1"/><rect x="445" y="240" width="11" height="1"/><rect x="456" y="239" width="9" height="1"/><rect x="465" y="238" width="11" height="1"/><rect x="476" y="237" width="10" height="1"/><rect x="486" y="236" width="11" height="1"/><rect x="497" y="235" width="12" height="1"/><rect x="509" y="234" width="11" height="1"/><rect x="520" y="233" width="11" height="1"/><rect x="531" y="232" width="11" height="1"/><rect x="542" y="231" width="12" height="1"/><rect x="554" y="230" width="11" height="1"/><rect x="565" y="229" width="10" height="1"/><rect x="575" y="228" width="11" height="1"/><rect x="586" y="227" width="9" height="1"/><rect x="595" y="226" width="12" height="1"/><rect x="607" y="225" width="11" height="1"/><rect x="618" y="224" width="13" height="1"/><rect x="631" y="223" width="11" height="1"/><rect x="642" y="222" width="13" height="1"/><rect x="655" y="221" width="12" height="1"/><rect x="667" y="220" width="14" height="1"/><rect x="681" y="219" width="13" height="1"/><rect x="694" y="218" width="15" height="1"/><rect x="709" y="217" width="16" height="1"/><rect x="725" y="216" width="17" height="1"/><rect x="742" y="215" width="17" height="1"/><rect x="759" y="214" width="17" height="1"/><rect x="776" y="213" width="16" height="1"/><rect x="792" y="212" width="19" height="1"/><rect x="811" y="211" width="19" height="1"/><rect x="830" y="210" width="21" height="1"/><rect x="851" y="209" width="41" height="1"/><rect x="892" y="208" width="49" height="1"/><rect x="941" y="209" width="33" height="1"/><rect x="974" y="210" width="25" height="1"/><rect x="999" y="211" width="18" height="1"/><rect x="1017" y="212" width="18" height="1"/><rect x="1035" y="213" width="18" height="1"/><rect x="1053" y="214" width="18" height="1"/><rect x="1071" y="215" width="17" height="1"/><rect x="1088" y="216" width="18" height="1"/><rect x="1106" y="217" width="18" height="1"/><rect x="1124" y="218" width="21" height="1"/><rect x="1145" y="219" width="29" height="1"/><rect x="1174" y="220" width="26" height="1"/><rect x="1200" y="221" width="18" height="1"/><rect x="34" y="346" width="4" height="1"/><rect x="38" y="345" width="9" height="1"/><rect x="47" y="344" width="8" height="1"/><rect x="55" y="343" width="9" height="1"/><rect x="64" y="342" width="9" height="1"/><rect x="73" y="341" width="8" height="1"/><rect x="81" y="340" width="9" height="1"/><rect x="90" y="339" width="9" height="1"/><rect x="99" y="338" width="8" height="1"/><rect x="107" y="337" width="9" height="1"/><rect x="116" y="336" width="9" height="1"/><rect x="125" y="335" width="8" height="1"/><rect x="133" y="334" width="8" height="1"/><rect x="141" y="333" width="8" height="1"/><rect x="149" y="332" width="9" height="1"/><rect x="158" y="331" width="8" height="1"/><rect x="166" y="330" width="8" height="1"/><rect x="174" y="329" width="9" height="1"/><rect x="183" y="328" width="8" height="1"/><rect x="191" y="327" width="8" height="1"/><rect x="199" y="326" width="8" height="1"/><rect x="207" y="325" width="9" height="1"/><rect x="216" y="324" width="10" height="1"/><rect x="226" y="323" width="10" height="1"/><rect x="236" y="322" width="10" height="1"/><rect x="246" y="321" width="10" height="1"/><rect x="256" y="320" width="10" height="1"/><rect x="266" y="319" width="10" height="1"/><rect x="276" y="318" width="10" height="1"/><rect x="286" y="317" width="10" height="1"/><rect x="296" y="316" width="9" height="1"/><rect x="305" y="315" width="10" height="1"/><rect x="315" y="314" width="10" height="1"/><rect x="325" y="313" width="9" height="1"/><rect x="334" y="312" width="10" height="1"/><rect x="344" y="311" width="9" height="1"/><rect x="353" y="310" width="10" height="1"/><rect x="363" y="309" width="9" height="1"/><rect x="372" y="308" width="9" height="1"/><rect x="381" y="307" width="9" height="1"/><rect x="390" y="306" width="10" height="1"/><rect x="400" y="305" width="9" height="1"/><rect x="409" y="304" width="9" height="1"/><rect x="418" y="303" width="9" height="1"/><rect x="427" y="302" width="9" height="1"/><rect x="436" y="301" width="9" height="1"/><rect x="445" y="300" width="11" height="1"/><rect x="456" y="299" width="9" height="1"/><rect x="465" y="298" width="11" height="1"/><rect x="476" y="297" width="10" height="1"/><rect x="486" y="296" width="11" height="1"/><rect x="497" y="295" width="12" height="1"/><rect x="509" y="294" width="11" height="1"/><rect x="520" y="293" width="11" height="1"/><rect x="531" y="292" width="11" height="1"/><rect x="542" y="291" width="12" height="1"/><rect x="554" y="290" width="11" height="1"/><rect x="565" y="289" width="10" height="1"/><rect x="575" y="288" width="11" height="1"/><rect x="586" y="287" width="9" height="1"/><rect x="595" y="286" width="12" height="1"/><rect x="607" y="285" width="11" height="1"/><rect x="618" y="284" width="13" height="1"/><rect x="631" y="283" width="11" height="1"/><rect x="642" y="282" width="13" height="1"/><rect x="655" y="281" width="12" height="1"/><rect x="667" y="280" width="14" height="1"/><rect x="681" y="279" width="13" height="1"/><rect x="694" y="278" width="15" height="1"/><rect x="709" y="277" width="16" height="1"/><rect x="725" y="276" width="17" height="1"/><rect x="742" y="275" width="17" height="1"/><rect x="759" y="274" width="17" height="1"/><rect x="776" y="273" width="16" height="1"/><rect x="792" y="272" width="19" height="1"/><rect x="811" y="271" width="19" height="1"/><rect x="830" y="270" width="21" height="1"/><rect x="851" y="269" width="41" height="1"/><rect x="892" y="268" width="49" height="1"/><rect x="941" y="269" width="33" height="1"/><rect x="974" y="270" width="25" height="1"/><rect x="999" y="271" width="18" height="1"/><rect x="1017" y="272" width="18" height="1"/><rect x="1035" y="273" width="18" height="1"/><rect x="1053" y="274" width="18" height="1"/><rect x="1071" y="275" width="17" height="1"/><rect x="1088" y="276" width="18" height="1"/><rect x="1106" y="277" width="18" height="1"/><rect x="1124" y="278" width="21" height="1"/><rect x="1145" y="279" width="29" height="1"/><rect x="1174" y="280" width="26" height="1"/><rect x="1200" y="281" width="18" height="1"/><rect x="33" y="405" width="5" height="2"/><rect x="38" y="404" width="9" height="2"/><rect x="47" y="403" width="8" height="2"/><rect x="55" y="402" width="9" height="2"/><rect x="64" y="401" width="9" height="2"/><rect x="73" y="400" width="8" height="2"/><rect x="81" y="399" width="9" height="2"/><rect x="90" y="398" width="9" height="2"/><rect x="99" y="397" width="8" height="2"/><rect x="107" y="396" width="9" height="2"/><rect x="116" y="395" width="9" height="2"/><rect x="125" y="394" width="8" height="2"/><rect x="133" y="393" width="8" height="2"/><rect x="141" y="392" width="8" height="2"/><rect x="149" y="391" width="9" height="2"/><rect x="158" y="390" width="8" height="2"/><rect x="166" y="389" width="8" height="2"/><rect x="174" y="388" width="9" height="2"/><rect x="183" y="387" width="8" height="2"/><rect x="191" y="386" width="8" height="2"/><rect x="199" y="385" width="8" height="2"/><rect x="207" y="384" width="9" height="2"/><rect x="216" y="383" width="10" height="2"/><rect x="226" y="382" width="10" height="2"/><rect x="236" y="381" width="10" height="2"/><rect x="246" y="380" width="10" height="2"/><rect x="256" y="379" width="10" height="2"/><rect x="266" y="378" width="10" height="2"/><rect x="276" y="377" width="10" height="2"/><rect x="286" y="376" width="10" height="2"/><rect x="296" y="375" width="9" height="2"/><rect x="305" y="374" width="10" height="2"/><rect x="315" y="373" width="10" height="2"/><rect x="325" y="372" width="9" height="2"/><rect x="334" y="371" width="10" height="2"/><rect x="344" y="370" width="9" height="2"/><rect x="353" y="369" width="10" height="2"/><rect x="363" y="368" width="9" height="2"/><rect x="372" y="367" width="9" height="2"/><rect x="381" y="366" width="9" height="2"/><rect x="390" y="365" width="10" height="2"/><rect x="400" y="364" width="9" height="2"/><rect x="409" y="363" width="9" height="2"/><rect x="418" y="362" width="9" height="2"/><rect x="427" y="361" width="9" height="2"/><rect x="436" y="360" width="9" height="2"/><rect x="445" y="359" width="11" height="2"/><rect x="456" y="358" width="9" height="2"/><rect x="465" y="357" width="11" height="2"/><rect x="476" y="356" width="10" height="2"/><rect x="486" y="355" width="11" height="2"/><rect x="497" y="354" width="12" height="2"/><rect x="509" y="353" width="11" height="2"/><rect x="520" y="352" width="11" height="2"/><rect x="531" y="351" width="11" height="2"/><rect x="542" y="350" width="12" height="2"/><rect x="554" y="349" width="11" height="2"/><rect x="565" y="348" width="10" height="2"/><rect x="575" y="347" width="11" height="2"/><rect x="586" y="346" width="9" height="2"/><rect x="595" y="345" width="12" height="2"/><rect x="607" y="344" width="11" height="2"/><rect x="618" y="343" width="13" height="2"/><rect x="631" y="342" width="11" height="2"/><rect x="642" y="341" width="13" height="2"/><rect x="655" y="340" width="12" height="2"/><rect x="667" y="339" width="14" height="2"/><rect x="681" y="338" width="13" height="2"/><rect x="694" y="337" width="15" height="2"/><rect x="709" y="336" width="16" height="2"/><rect x="725" y="335" width="17" height="2"/><rect x="742" y="334" width="17" height="2"/><rect x="759" y="333" width="17" height="2"/><rect x="776" y="332" width="16" height="2"/><rect x="792" y="331" width="19" height="2"/><rect x="811" y="330" width="19" height="2"/><rect x="830" y="329" width="21" height="2"/><rect x="851" y="328" width="41" height="2"/><rect x="892" y="327" width="49" height="2"/><rect x="941" y="328" width="33" height="2"/><rect x="974" y="329" width="25" height="2"/><rect x="999" y="330" width="18" height="2"/><rect x="1017" y="331" width="18" height="2"/><rect x="1035" y="332" width="18" height="2"/><rect x="1053" y="333" width="18" height="2"/><rect x="1071" y="334" width="17" height="2"/><rect x="1088" y="335" width="18" height="2"/><rect x="1106" y="336" width="18" height="2"/><rect x="1124" y="337" width="21" height="2"/><rect x="1145" y="338" width="29" height="2"/><rect x="1174" y="339" width="26" height="2"/><rect x="1200" y="340" width="18" height="2"/><rect x="34" y="466" width="4" height="1"/><rect x="38" y="465" width="9" height="1"/><rect x="47" y="464" width="8" height="1"/><rect x="55" y="463" width="9" height="1"/><rect x="64" y="462" width="9" height="1"/><rect x="73" y="461" width="8" height="1"/><rect x="81" y="460" width="9" height="1"/><rect x="90" y="459" width="9" height="1"/><rect x="99" y="458" width="8" height="1"/><rect x="107" y="457" width="9" height="1"/><rect x="116" y="456" width="9" height="1"/><rect x="125" y="455" width="8" height="1"/><rect x="133" y="454" width="8" height="1"/><rect x="141" y="453" width="8" height="1"/><rect x="149" y="452" width="9" height="1"/><rect x="158" y="451" width="8" height="1"/><rect x="166" y="450" width="8" height="1"/><rect x="174" y="449" width="9" height="1"/><rect x="183" y="448" width="8" height="1"/><rect x="191" y="447" width="8" height="1"/><rect x="199" y="446" width="8" height="1"/><rect x="207" y="445" width="9" height="1"/><rect x="216" y="444" width="10" height="1"/><rect x="226" y="443" width="10" height="1"/><rect x="236" y="442" width="10" height="1"/><rect x="246" y="441" width="10" height="1"/><rect x="256" y="440" width="10" height="1"/><rect x="266" y="439" width="10" height="1"/><rect x="276" y="438" width="10" height="1"/><rect x="286" y="437" width="10" height="1"/><rect x="296" y="436" width="9" height="1"/><rect x="305" y="435" width="10" height="1"/><rect x="315" y="434" width="10" height="1"/><rect x="325" y="433" width="9" height="1"/><rect x="334" y="432" width="10" height="1"/><rect x="344" y="431" width="9" height="1"/><rect x="353" y="430" width="10" height="1"/><rect x="363" y="429" width="9" height="1"/><rect x="372" y="428" width="9" height="1"/><rect x="381" y="427" width="9" height="1"/><rect x="390" y="426" width="10" height="1"/><rect x="400" y="425" width="9" height="1"/><rect x="409" y="424" width="9" height="1"/><rect x="418" y="423" width="9" height="1"/><rect x="427" y="422" width="9" height="1"/><rect x="436" y="421" width="9" height="1"/><rect x="445" y="420" width="11" height="1"/><rect x="456" y="419" width="9" height="1"/><rect x="465" y="418" width="11" height="1"/><rect x="476" y="417" width="10" height="1"/><rect x="486" y="416" width="11" height="1"/><rect x="497" y="415" width="12" height="1"/><rect x="509" y="414" width="11" height="1"/><rect x="520" y="413" width="11" height="1"/><rect x="531" y="412" width="11" height="1"/><rect x="542" y="411" width="12" height="1"/><rect x="554" y="410" width="11" height="1"/><rect x="565" y="409" width="10" height="1"/><rect x="575" y="408" width="11" height="1"/><rect x="586" y="407" width="9" height="1"/><rect x="595" y="406" width="12" height="1"/><rect x="607" y="405" width="11" height="1"/><rect x="618" y="404" width="13" height="1"/><rect x="631" y="403" width="11" height="1"/><rect x="642" y="402" width="13" height="1"/><rect x="655" y="401" width="12" height="1"/><rect x="667" y="400" width="14" height="1"/><rect x="681" y="399" width="13" height="1"/><rect x="694" y="398" width="15" height="1"/><rect x="709" y="397" width="16" height="1"/><rect x="725" y="396" width="17" height="1"/><rect x="742" y="395" width="17" height="1"/><rect x="759" y="394" width="17" height="1"/><rect x="776" y="393" width="16" height="1"/><rect x="792" y="392" width="19" height="1"/><rect x="811" y="391" width="19" height="1"/><rect x="830" y="390" width="21" height="1"/><rect x="851" y="389" width="41" height="1"/><rect x="892" y="388" width="49" height="1"/><rect x="941" y="389" width="33" height="1"/><rect x="974" y="390" width="25" height="1"/><rect x="999" y="391" width="18" height="1"/><rect x="1017" y="392" width="18" height="1"/><rect x="1035" y="393" width="18" height="1"/><rect x="1053" y="394" width="18" height="1"/><rect x="1071" y="395" width="17" height="1"/><rect x="1088" y="396" width="18" height="1"/><rect x="1106" y="397" width="18" height="1"/><rect x="1124" y="398" width="21" height="1"/><rect x="1145" y="399" width="29" height="1"/><rect x="1174" y="400" width="26" height="1"/><rect x="1200" y="401" width="18" height="1"/><rect x="34" y="526" width="4" height="1"/><rect x="38" y="525" width="9" height="1"/><rect x="47" y="524" width="8" height="1"/><rect x="55" y="523" width="9" height="1"/><rect x="64" y="522" width="9" height="1"/><rect x="73" y="521" width="8" height="1"/><rect x="81" y="520" width="9" height="1"/><rect x="90" y="519" width="9" height="1"/><rect x="99" y="518" width="8" height="1"/><rect x="107" y="517" width="9" height="1"/><rect x="116" y="516" width="9" height="1"/><rect x="125" y="515" width="8" height="1"/><rect x="133" y="514" width="8" height="1"/><rect x="141" y="513" width="8" height="1"/><rect x="149" y="512" width="9" height="1"/><rect x="158" y="511" width="8" height="1"/><rect x="166" y="510" width="8" height="1"/><rect x="174" y="509" width="9" height="1"/><rect x="183" y="508" width="8" height="1"/><rect x="191" y="507" width="8" height="1"/><rect x="199" y="506" width="8" height="1"/><rect x="207" y="505" width="9" height="1"/><rect x="216" y="504" width="10" height="1"/><rect x="226" y="503" width="10" height="1"/><rect x="236" y="502" width="10" height="1"/><rect x="246" y="501" width="10" height="1"/><rect x="256" y="500" width="10" height="1"/><rect x="266" y="499" width="10" height="1"/><rect x="276" y="498" width="10" height="1"/><rect x="286" y="497" width="10" height="1"/><rect x="296" y="496" width="9" height="1"/><rect x="305" y="495" width="10" height="1"/><rect x="315" y="494" width="10" height="1"/><rect x="325" y="493" width="9" height="1"/><rect x="334" y="492" width="10" height="1"/><rect x="344" y="491" width="9" height="1"/><rect x="353" y="490" width="10" height="1"/><rect x="363" y="489" width="9" height="1"/><rect x="372" y="488" width="9" height="1"/><rect x="381" y="487" width="9" height="1"/><rect x="390" y="486" width="10" height="1"/><rect x="400" y="485" width="9" height="1"/><rect x="409" y="484" width="9" height="1"/><rect x="418" y="483" width="9" height="1"/><rect x="427" y="482" width="9" height="1"/><rect x="436" y="481" width="9" height="1"/><rect x="445" y="480" width="11" height="1"/><rect x="456" y="479" width="9" height="1"/><rect x="465" y="478" width="11" height="1"/><rect x="476" y="477" width="10" height="1"/><rect x="486" y="476" width="11" height="1"/><rect x="497" y="475" width="12" height="1"/><rect x="509" y="474" width="11" height="1"/><rect x="520" y="473" width="11" height="1"/><rect x="531" y="472" width="11" height="1"/><rect x="542" y="471" width="12" height="1"/><rect x="554" y="470" width="11" height="1"/><rect x="565" y="469" width="10" height="1"/><rect x="575" y="468" width="11" height="1"/><rect x="586" y="467" width="9" height="1"/><rect x="595" y="466" width="12" height="1"/><rect x="607" y="465" width="11" height="1"/><rect x="618" y="464" width="13" height="1"/><rect x="631" y="463" width="11" height="1"/><rect x="642" y="462" width="13" height="1"/><rect x="655" y="461" width="12" height="1"/><rect x="667" y="460" width="14" height="1"/><rect x="681" y="459" width="13" height="1"/><rect x="694" y="458" width="15" height="1"/><rect x="709" y="457" width="16" height="1"/><rect x="725" y="456" width="17" height="1"/><rect x="742" y="455" width="17" height="1"/><rect x="759" y="454" width="17" height="1"/><rect x="776" y="453" width="16" height="1"/><rect x="792" y="452" width="19" height="1"/><rect x="811" y="451" width="19" height="1"/><rect x="830" y="450" width="21" height="1"/><rect x="851" y="449" width="41" height="1"/><rect x="892" y="448" width="49" height="1"/><rect x="941" y="449" width="33" height="1"/><rect x="974" y="450" width="25" height="1"/><rect x="999" y="451" width="18" height="1"/><rect x="1017" y="452" width="18" height="1"/><rect x="1035" y="453" width="18" height="1"/><rect x="1053" y="454" width="18" height="1"/><rect x="1071" y="455" width="17" height="1"/><rect x="1088" y="456" width="18" height="1"/><rect x="1106" y="457" width="18" height="1"/><rect x="1124" y="458" width="21" height="1"/><rect x="1145" y="459" width="29" height="1"/><rect x="1174" y="460" width="26" height="1"/><rect x="1200" y="461" width="18" height="1"/><rect x="34" y="586" width="4" height="1"/><rect x="38" y="585" width="9" height="1"/><rect x="47" y="584" width="8" height="1"/><rect x="55" y="583" width="9" height="1"/><rect x="64" y="582" width="9" height="1"/><rect x="73" y="581" width="8" height="1"/><rect x="81" y="580" width="9" height="1"/><rect x="90" y="579" width="9" height="1"/><rect x="99" y="578" width="8" height="1"/><rect x="107" y="577" width="9" height="1"/><rect x="116" y="576" width="9" height="1"/><rect x="125" y="575" width="8" height="1"/><rect x="133" y="574" width="8" height="1"/><rect x="141" y="573" width="8" height="1"/><rect x="149" y="572" width="9" height="1"/><rect x="158" y="571" width="8" height="1"/><rect x="166" y="570" width="8" height="1"/><rect x="174" y="569" width="9" height="1"/><rect x="183" y="568" width="8" height="1"/><rect x="191" y="567" width="8" height="1"/><rect x="199" y="566" width="8" height="1"/><rect x="207" y="565" width="9" height="1"/><rect x="216" y="564" width="10" height="1"/><rect x="226" y="563" width="10" height="1"/><rect x="236" y="562" width="10" height="1"/><rect x="246" y="561" width="10" height="1"/><rect x="256" y="560" width="10" height="1"/><rect x="266" y="559" width="10" height="1"/><rect x="276" y="558" width="10" height="1"/><rect x="286" y="557" width="10" height="1"/><rect x="296" y="556" width="9" height="1"/><rect x="305" y="555" width="10" height="1"/><rect x="315" y="554" width="10" height="1"/><rect x="325" y="553" width="9" height="1"/><rect x="334" y="552" width="10" height="1"/><rect x="344" y="551" width="9" height="1"/><rect x="353" y="550" width="10" height="1"/><rect x="363" y="549" width="9" height="1"/><rect x="372" y="548" width="9" height="1"/><rect x="381" y="547" width="9" height="1"/><rect x="390" y="546" width="10" height="1"/><rect x="400" y="545" width="9" height="1"/><rect x="409" y="544" width="9" height="1"/><rect x="418" y="543" width="9" height="1"/><rect x="427" y="542" width="9" height="1"/><rect x="436" y="541" width="9" height="1"/><rect x="445" y="540" width="11" height="1"/><rect x="456" y="539" width="9" height="1"/><rect x="465" y="538" width="11" height="1"/><rect x="476" y="537" width="10" height="1"/><rect x="486" y="536" width="11" height="1"/><rect x="497" y="535" width="12" height="1"/><rect x="509" y="534" width="11" height="1"/><rect x="520" y="533" width="11" height="1"/><rect x="531" y="532" width="11" height="1"/><rect x="542" y="531" width="12" height="1"/><rect x="554" y="530" width="11" height="1"/><rect x="565" y="529" width="10" height="1"/><rect x="575" y="528" width="11" height="1"/><rect x="586" y="527" width="9" height="1"/><rect x="595" y="526" width="12" height="1"/><rect x="607" y="525" width="11" height="1"/><rect x="618" y="524" width="13" height="1"/><rect x="631" y="523" width="11" height="1"/><rect x="642" y="522" width="13" height="1"/><rect x="655" y="521" width="12" height="1"/><rect x="667" y="520" width="14" height="1"/><rect x="681" y="519" width="13" height="1"/><rect x="694" y="518" width="15" height="1"/><rect x="709" y="517" width="16" height="1"/><rect x="725" y="516" width="17" height="1"/><rect x="742" y="515" width="17" height="1"/><rect x="759" y="514" width="17" height="1"/><rect x="776" y="513" width="16" height="1"/><rect x="792" y="512" width="19" height="1"/><rect x="811" y="511" width="19" height="1"/><rect x="830" y="510" width="21" height="1"/><rect x="851" y="509" width="41" height="1"/><rect x="892" y="508" width="49" height="1"/><rect x="941" y="509" width="33" height="1"/><rect x="974" y="510" width="25" height="1"/><rect x="999" y="511" width="18" height="1"/><rect x="1017" y="512" width="18" height="1"/><rect x="1035" y="513" width="18" height="1"/><rect x="1053" y="514" width="18" height="1"/><rect x="1071" y="515" width="17" height="1"/><rect x="1088" y="516" width="18" height="1"/><rect x="1106" y="517" width="18" height="1"/><rect x="1124" y="518" width="21" height="1"/><rect x="1145" y="519" width="29" height="1"/><rect x="1174" y="520" width="26" height="1"/><rect x="1200" y="521" width="18" height="1"/><rect x="33" y="645" width="5" height="2"/><rect x="38" y="644" width="9" height="2"/><rect x="47" y="643" width="8" height="2"/><rect x="55" y="642" width="9" height="2"/><rect x="64" y="641" width="9" height="2"/><rect x="73" y="640" width="8" height="2"/><rect x="81" y="639" width="9" height="2"/><rect x="90" y="638" width="9" height="2"/><rect x="99" y="637" width="8" height="2"/><rect x="107" y="636" width="9" height="2"/><rect x="116" y="635" width="9" height="2"/><rect x="125" y="634" width="8" height="2"/><rect x="133" y="633" width="8" height="2"/><rect x="141" y="632" width="8" height="2"/><rect x="149" y="631" width="9" height="2"/><rect x="158" y="630" width="8" height="2"/><rect x="166" y="629" width="8" height="2"/><rect x="174" y="628" width="9" height="2"/><rect x="183" y="627" width="8" height="2"/><rect x="191" y="626" width="8" height="2"/><rect x="199" y="625" width="8" height="2"/><rect x="207" y="624" width="9" height="2"/><rect x="216" y="623" width="10" height="2"/><rect x="226" y="622" width="10" height="2"/><rect x="236" y="621" width="10" height="2"/><rect x="246" y="620" width="10" height="2"/><rect x="256" y="619" width="10" height="2"/><rect x="266" y="618" width="10" height="2"/><rect x="276" y="617" width="10" height="2"/><rect x="286" y="616" width="10" height="2"/><rect x="296" y="615" width="9" height="2"/><rect x="305" y="614" width="10" height="2"/><rect x="315" y="613" width="10" height="2"/><rect x="325" y="612" width="9" height="2"/><rect x="334" y="611" width="10" height="2"/><rect x="344" y="610" width="9" height="2"/><rect x="353" y="609" width="10" height="2"/><rect x="363" y="608" width="9" height="2"/><rect x="372" y="607" width="9" height="2"/><rect x="381" y="606" width="9" height="2"/><rect x="390" y="605" width="10" height="2"/><rect x="400" y="604" width="9" height="2"/><rect x="409" y="603" width="9" height="2"/><rect x="418" y="602" width="9" height="2"/><rect x="427" y="601" width="9" height="2"/><rect x="436" y="600" width="9" height="2"/><rect x="445" y="599" width="11" height="2"/><rect x="456" y="598" width="9" height="2"/><rect x="465" y="597" width="11" height="2"/><rect x="476" y="596" width="10" height="2"/><rect x="486" y="595" width="11" height="2"/><rect x="497" y="594" width="12" height="2"/><rect x="509" y="593" width="11" height="2"/><rect x="520" y="592" width="11" height="2"/><rect x="531" y="591" width="11" height="2"/><rect x="542" y="590" width="12" height="2"/><rect x="554" y="589" width="11" height="2"/><rect x="565" y="588" width="10" height="2"/><rect x="575" y="587" width="11" height="2"/><rect x="586" y="586" width="9" height="2"/><rect x="595" y="585" width="12" height="2"/><rect x="607" y="584" width="11" height="2"/><rect x="618" y="583" width="13" height="2"/><rect x="631" y="582" width="11" height="2"/><rect x="642" y="581" width="13" height="2"/><rect x="655" y="580" width="12" height="2"/><rect x="667" y="579" width="14" height="2"/><rect x="681" y="578" width="13" height="2"/><rect x="694" y="577" width="15" height="2"/><rect x="709" y="576" width="16" height="2"/><rect x="725" y="575" width="17" height="2"/><rect x="742" y="574" width="17" height="2"/><rect x="759" y="573" width="17" height="2"/><rect x="776" y="572" width="16" height="2"/><rect x="792" y="571" width="19" height="2"/><rect x="811" y="570" width="19" height="2"/><rect x="830" y="569" width="21" height="2"/><rect x="851" y="568" width="41" height="2"/><rect x="892" y="567" width="49" height="2"/><rect x="941" y="568" width="33" height="2"/><rect x="974" y="569" width="25" height="2"/><rect x="999" y="570" width="18" height="2"/><rect x="1017" y="571" width="18" height="2"/><rect x="1035" y="572" width="18" height="2"/><rect x="1053" y="573" width="18" height="2"/><rect x="1071" y="574" width="17" height="2"/><rect x="1088" y="575" width="18" height="2"/><rect x="1106" y="576" width="18" height="2"/><rect x="1124" y="577" width="21" height="2"/><rect x="1145" y="578" width="29" height="2"/><rect x="1174" y="579" width="26" height="2"/><rect x="1200" y="580" width="18" height="2"/><rect x="34" y="706" width="4" height="1"/><rect x="38" y="705" width="9" height="1"/><rect x="47" y="704" width="8" height="1"/><rect x="55" y="703" width="9" height="1"/><rect x="64" y="702" width="9" height="1"/><rect x="73" y="701" width="8" height="1"/><rect x="81" y="700" width="9" height="1"/><rect x="90" y="699" width="9" height="1"/><rect x="99" y="698" width="8" height="1"/><rect x="107" y="697" width="9" height="1"/><rect x="116" y="696" width="9" height="1"/><rect x="125" y="695" width="8" height="1"/><rect x="133" y="694" width="8" height="1"/><rect x="141" y="693" width="8" height="1"/><rect x="149" y="692" width="9" height="1"/><rect x="158" y="691" width="8" height="1"/><rect x="166" y="690" width="8" height="1"/><rect x="174" y="689" width="9" height="1"/><rect x="183" y="688" width="8" height="1"/><rect x="191" y="687" width="8" height="1"/><rect x="199" y="686" width="8" height="1"/><rect x="207" y="685" width="9" height="1"/><rect x="216" y="684" width="10" height="1"/><rect x="226" y="683" width="10" height="1"/><rect x="236" y="682" width="10" height="1"/><rect x="246" y="681" width="10" height="1"/><rect x="256" y="680" width="10" height="1"/><rect x="266" y="679" width="10" height="1"/><rect x="276" y="678" width="10" height="1"/><rect x="286" y="677" width="10" height="1"/><rect x="296" y="676" width="9" height="1"/><rect x="305" y="675" width="10" height="1"/><rect x="315" y="674" width="10" height="1"/><rect x="325" y="673" width="9" height="1"/><rect x="334" y="672" width="10" height="1"/><rect x="344" y="671" width="9" height="1"/><rect x="353" y="670" width="10" height="1"/><rect x="363" y="669" width="9" height="1"/><rect x="372" y="668" width="9" height="1"/><rect x="381" y="667" width="9" height="1"/><rect x="390" y="666" width="10" height="1"/><rect x="400" y="665" width="9" height="1"/><rect x="409" y="664" width="9" height="1"/><rect x="418" y="663" width="9" height="1"/><rect x="427" y="662" width="9" height="1"/><rect x="436" y="661" width="9" height="1"/><rect x="445" y="660" width="11" height="1"/><rect x="456" y="659" width="9" height="1"/><rect x="465" y="658" width="11" height="1"/><rect x="476" y="657" width="10" height="1"/><rect x="486" y="656" width="11" height="1"/><rect x="497" y="655" width="12" height="1"/><rect x="509" y="654" width="11" height="1"/><rect x="520" y="653" width="11" height="1"/><rect x="531" y="652" width="11" height="1"/><rect x="542" y="651" width="12" height="1"/><rect x="554" y="650" width="11" height="1"/><rect x="565" y="649" width="10" height="1"/><rect x="575" y="648" width="11" height="1"/><rect x="586" y="647" width="9" height="1"/><rect x="595" y="646" width="12" height="1"/><rect x="607" y="645" width="11" height="1"/><rect x="618" y="644" width="13" height="1"/><rect x="631" y="643" width="11" height="1"/><rect x="642" y="642" width="13" height="1"/><rect x="655" y="641" width="12" height="1"/><rect x="667" y="640" width="14" height="1"/><rect x="681" y="639" width="13" height="1"/><rect x="694" y="638" width="15" height="1"/><rect x="709" y="637" width="16" height="1"/><rect x="725" y="636" width="17" height="1"/><rect x="742" y="635" width="17" height="1"/><rect x="759" y="634" width="17" height="1"/><rect x="776" y="633" width="16" height="1"/><rect x="792" y="632" width="19" height="1"/><rect x="811" y="631" width="19" height="1"/><rect x="830" y="630" width="21" height="1"/><rect x="851" y="629" width="41" height="1"/><rect x="892" y="628" width="49" height="1"/><rect x="941" y="629" width="33" height="1"/><rect x="974" y="630" width="25" height="1"/><rect x="999" y="631" width="18" height="1"/><rect x="1017" y="632" width="18" height="1"/><rect x="1035" y="633" width="18" height="1"/><rect x="1053" y="634" width="18" height="1"/><rect x="1071" y="635" width="17" height="1"/><rect x="1088" y="636" width="18" height="1"/><rect x="1106" y="637" width="18" height="1"/><rect x="1124" y="638" width="21" height="1"/><rect x="1145" y="639" width="29" height="1"/><rect x="1174" y="640" width="26" height="1"/><rect x="1200" y="641" width="18" height="1"/><rect x="372" y="728" width="9" height="1"/><rect x="381" y="727" width="9" height="1"/><rect x="390" y="726" width="10" height="1"/><rect x="400" y="725" width="9" height="1"/><rect x="409" y="724" width="9" height="1"/><rect x="418" y="723" width="9" height="1"/><rect x="427" y="722" width="9" height="1"/><rect x="436" y="721" width="9" height="1"/><rect x="445" y="720" width="11" height="1"/><rect x="456" y="719" width="9" height="1"/><rect x="465" y="718" width="11" height="1"/><rect x="476" y="717" width="10" height="1"/><rect x="486" y="716" width="11" height="1"/><rect x="497" y="715" width="12" height="1"/><rect x="509" y="714" width="11" height="1"/><rect x="520" y="713" width="11" height="1"/><rect x="531" y="712" width="11" height="1"/><rect x="542" y="711" width="12" height="1"/><rect x="554" y="710" width="11" height="1"/><rect x="565" y="709" width="10" height="1"/><rect x="575" y="708" width="11" height="1"/><rect x="586" y="707" width="9" height="1"/><rect x="595" y="706" width="12" height="1"/><rect x="607" y="705" width="11" height="1"/><rect x="618" y="704" width="13" height="1"/><rect x="631" y="703" width="11" height="1"/><rect x="642" y="702" width="13" height="1"/><rect x="655" y="701" width="12" height="1"/><rect x="667" y="700" width="14" height="1"/><rect x="681" y="699" width="13" height="1"/><rect x="694" y="698" width="15" height="1"/><rect x="709" y="697" width="16" height="1"/><rect x="725" y="696" width="17" height="1"/><rect x="742" y="695" width="17" height="1"/><rect x="759" y="694" width="17" height="1"/><rect x="776" y="693" width="16" height="1"/><rect x="792" y="692" width="19" height="1"/><rect x="811" y="691" width="19" height="1"/><rect x="830" y="690" width="21" height="1"/><rect x="851" y="689" width="41" height="1"/><rect x="892" y="688" width="49" height="1"/><rect x="941" y="689" width="33" height="1"/><rect x="974" y="690" width="25" height="1"/><rect x="999" y="691" width="18" height="1"/><rect x="1017" y="692" width="18" height="1"/><rect x="1035" y="693" width="18" height="1"/><rect x="1053" y="694" width="18" height="1"/><rect x="1071" y="695" width="17" height="1"/><rect x="1088" y="696" width="18" height="1"/><rect x="1106" y="697" width="18" height="1"/><rect x="1124" y="698" width="21" height="1"/><rect x="1145" y="699" width="29" height="1"/><rect x="1174" y="700" width="26" height="1"/><rect x="1200" y="701" width="18" height="1"/></g><g fill="#ffff00"><rect x="33" y="648" width="1" height="37"/><rect x="31" y="654" width="2" height="1"/><rect x="34" y="673" width="2" height="1"/><rect x="39" y="660" width="1" height="27"/><rect x="37" y="664" width="2" height="1"/><rect x="40" y="670" width="2" height="1"/><rect x="45" y="664" width="1" height="31"/><rect x="43" y="669" width="2" height="1"/><rect x="46" y="667" width="2" height="1"/><rect x="51" y="632" width="1" height="23"/><rect x="49" y="650" width="2" height="1"/><rect x="52" y="642" width="2" height="1"/><rect x="57" y="642" width="1" height="31"/><rect x="55" y="650" width="2" height="1"/><rect x="58" y="672" width="2" height="1"/><rect x="63" y="639" width="1" height="32"/><rect x="61" y="657" width="2" height="1"/><rect x="64" y="670" width="2" height="1"/><rect x="69" y="589" width="1" height="58"/><rect x="67" y="645" width="2" height="1"/><rect x="70" y="589" width="2" height="1"/><rect x="75" y="545" width="1" height="59"/><rect x="73" y="587" width="2" height="1"/><rect x="76" y="562" width="2" height="1"/><rect x="81" y="541" width="1" height="36"/><rect x="79" y="559" width="2" height="1"/><rect x="82" y="576" width="2" height="1"/><rect x="87" y="549" width="1" height="29"/><rect x="85" y="571" width="2" height="1"/><rect x="88" y="558" width="2" height="1"/><rect x="93" y="526" width="1" height="40"/><rect x="91" y="543" width="2" height="1"/><rect x="94" y="565" width="2" height="1"/><rect x="99" y="557" width="1" height="36"/><rect x="97" y="566" width="2" height="1"/><rect x="100" y="583" width="2" height="1"/><rect x="105" y="561" width="1" height="24"/><rect x="103" y="577" width="2" height="1"/><rect x="106" y="563" width="2" height="1"/><rect x="111" y="522" width="1" height="23"/><rect x="109" y="542" width="2" height="1"/><rect x="112" y="538" width="2" height="1"/><rect x="117" y="502" width="1" height="49"/><rect x="115" y="528" width="2" height="1"/><rect x="118" y="502" width="2" height="1"/><rect x="123" y="497" width="1" height="39"/><rect x="121" y="513" width="2" height="1"/><rect x="124" y="534" width="2" height="1"/><rect x="129" y="524" width="1" height="30"/><rect x="127" y="545" width="2" height="1"/><rect x="130" y="539" width="2" height="1"/><rect x="135" y="528" width="1" height="53"/><rect x="133" y="539" width="2" height="1"/><rect x="136" y="578" width="2" height="1"/><rect x="141" y="576" width="1" height="23"/><rect x="139" y="594" width="2" height="1"/><rect x="142" y="577" width="2" height="1"/><rect x="147" y="556" width="1" height="31"/><rect x="145" y="577" width="2" height="1"/><rect x="148" y="561" width="2" height="1"/><rect x="153" y="558" width="1" height="86"/><rect x="151" y="562" width="2" height="1"/><rect x="154" y="643" width="2" height="1"/><rect x="159" y="635" width="1" height="31"/><rect x="157" y="644" width="2" height="1"/><rect x="160" y="652" width="2" height="1"/><rect x="165" y="631" width="1" height="21"/><rect x="163" y="644" width="2" height="1"/><rect x="166" y="632" width="2" height="1"/><rect x="171" y="619" width="1" height="39"/><rect x="169" y="628" width="2" height="1"/><rect x="172" y="636" width="2" height="1"/><rect x="177" y="619" width="1" height="25"/><rect x="175" y="640" width="2" height="1"/><rect x="178" y="627" width="2" height="1"/><rect x="183" y="615" width="1" height="40"/><rect x="181" y="624" width="2" height="1"/><rect x="184" y="646" width="2" height="1"/><rect x="189" y="605" width="1" height="31"/><rect x="187" y="622" width="2" height="1"/><rect x="190" y="633" width="2" height="1"/><rect x="195" y="611" width="1" height="26"/><rect x="193" y="632" width="2" height="1"/><rect x="196" y="621" width="2" height="1"/><rect x="201" y="619" width="1" height="36"/><rect x="199" y="627" width="2" height="1"/><rect x="202" y="654" width="2" height="1"/><rect x="207" y="649" width="1" height="18"/><rect x="205" y="654" width="2" height="1"/><rect x="208" y="660" width="2" height="1"/><rect x="213" y="661" width="1" height="24"/><rect x="211" y="667" width="2" height="1"/><rect x="214" y="675" width="2" height="1"/><rect x="219" y="657" width="1" height="20"/><rect x="217" y="669" width="2" height="1"/><rect x="220" y="672" width="2" height="1"/><rect x="225" y="666" width="1" height="31"/><rect x="223" y="676" width="2" height="1"/><rect x="226" y="693" width="2" height="1"/><rect x="231" y="664" width="1" height="30"/><rect x="229" y="673" width="2" height="1"/><rect x="232" y="685" width="2" height="1"/><rect x="237" y="675" width="1" height="21"/><rect x="235" y="678" width="2" height="1"/><rect x="238" y="690" width="2" height="1"/><rect x="243" y="672" width="1" height="41"/><rect x="241" y="705" width="2" height="1"/><rect x="244" y="680" width="2" height="1"/><rect x="249" y="622" width="1" height="43"/><rect x="247" y="663" width="2" height="1"/><rect x="250" y="623" width="2" height="1"/><rect x="255" y="583" width="1" height="31"/><rect x="253" y="612" width="2" height="1"/><rect x="256" y="583" width="2" height="1"/><rect x="261" y="570" width="1" height="27"/><rect x="259" y="585" width="2" height="1"/><rect x="262" y="587" width="2" height="1"/><rect x="267" y="575" width="1" height="17"/><rect x="265" y="580" width="2" height="1"/><rect x="268" y="585" width="2" height="1"/><rect x="273" y="517" width="1" height="64"/><rect x="271" y="577" width="2" height="1"/><rect x="274" y="526" width="2" height="1"/><rect x="279" y="493" width="1" height="43"/><rect x="277" y="520" width="2" height="1"/><rect x="280" y="505" width="2" height="1"/><rect x="285" y="501" width="1" height="29"/><rect x="283" y="508" width="2" height="1"/><rect x="286" y="524" width="2" height="1"/><rect x="291" y="483" width="1" height="34"/><rect x="289" y="514" width="2" height="1"/><rect x="292" y="484" width="2" height="1"/><rect x="297" y="446" width="1" height="57"/><rect x="295" y="488" width="2" height="1"/><rect x="298" y="470" width="2" height="1"/><rect x="303" y="434" width="1" height="52"/><rect x="301" y="453" width="2" height="1"/><rect x="304" y="474" width="2" height="1"/><rect x="309" y="448" width="1" height="52"/><rect x="307" y="467" width="2" height="1"/><rect x="310" y="499" width="2" height="1"/><rect x="315" y="483" width="1" height="31"/><rect x="313" y="498" width="2" height="1"/><rect x="316" y="491" width="2" height="1"/><rect x="321" y="429" width="1" height="63"/><rect x="319" y="476" width="2" height="1"/><rect x="322" y="429" width="2" height="1"/><rect x="327" y="408" width="1" height="48"/><rect x="325" y="432" width="2" height="1"/><rect x="328" y="435" width="2" height="1"/><rect x="333" y="396" width="1" height="33"/><rect x="331" y="427" width="2" height="1"/><rect x="334" y="417" width="2" height="1"/><rect x="339" y="421" width="1" height="30"/><rect x="337" y="425" width="2" height="1"/><rect x="340" y="433" width="2" height="1"/><rect x="345" y="418" width="1" height="73"/><rect x="343" y="440" width="2" height="1"/><rect x="346" y="490" width="2" height="1"/><rect x="351" y="459" width="1" height="35"/><rect x="349" y="471" width="2" height="1"/><rect x="352" y="479" width="2" height="1"/><rect x="357" y="439" width="1" height="56"/><rect x="355" y="479" width="2" height="1"/><rect x="358" y="449" width="2" height="1"/><rect x="363" y="433" width="1" height="29"/><rect x="361" y="449" width="2" height="1"/><rect x="364" y="446" width="2" height="1"/><rect x="369" y="421" width="1" height="56"/><rect x="367" y="439" width="2" height="1"/><rect x="370" y="475" width="2" height="1"/><rect x="375" y="467" width="1" height="37"/><rect x="373" y="479" width="2" height="1"/><rect x="376" y="471" width="2" height="1"/><rect x="381" y="417" width="1" height="54"/><rect x="379" y="437" width="2" height="1"/><rect x="382" y="455" width="2" height="1"/><rect x="387" y="419" width="1" height="54"/><rect x="385" y="438" width="2" height="1"/><rect x="388" y="470" width="2" height="1"/><rect x="393" y="487" width="1" height="33"/><rect x="391" y="488" width="2" height="1"/><rect x="394" y="509" width="2" height="1"/><rect x="399" y="492" width="1" height="21"/><rect x="397" y="499" width="2" height="1"/><rect x="400" y="495" width="2" height="1"/><rect x="405" y="464" width="1" height="51"/><rect x="403" y="507" width="2" height="1"/><rect x="406" y="473" width="2" height="1"/><rect x="411" y="425" width="1" height="34"/><rect x="409" y="452" width="2" height="1"/><rect x="412" y="425" width="2" height="1"/><rect x="417" y="360" width="1" height="73"/><rect x="415" y="431" width="2" height="1"/><rect x="418" y="362" width="2" height="1"/><rect x="423" y="342" width="1" height="25"/><rect x="421" y="347" width="2" height="1"/><rect x="424" y="345" width="2" height="1"/><rect x="429" y="311" width="1" height="50"/><rect x="427" y="358" width="2" height="1"/><rect x="430" y="321" width="2" height="1"/><rect x="435" y="322" width="1" height="39"/><rect x="433" y="327" width="2" height="1"/><rect x="436" y="345" width="2" height="1"/><rect x="441" y="334" width="1" height="49"/><rect x="439" y="355" width="2" height="1"/><rect x="442" y="382" width="2" height="1"/><rect x="447" y="321" width="1" height="54"/><rect x="445" y="355" width="2" height="1"/><rect x="448" y="365" width="2" height="1"/><rect x="453" y="371" width="1" height="28"/><rect x="451" y="378" width="2" height="1"/><rect x="454" y="382" width="2" height="1"/><rect x="459" y="360" width="1" height="60"/><rect x="457" y="365" width="2" height="1"/><rect x="460" y="390" width="2" height="1"/><rect x="465" y="409" width="1" height="40"/><rect x="463" y="417" width="2" height="1"/><rect x="466" y="437" width="2" height="1"/><rect x="471" y="420" width="1" height="30"/><rect x="469" y="430" width="2" height="1"/><rect x="472" y="447" width="2" height="1"/><rect x="477" y="420" width="1" height="35"/><rect x="475" y="435" width="2" height="1"/><rect x="478" y="440" width="2" height="1"/><rect x="483" y="390" width="1" height="38"/><rect x="481" y="423" width="2" height="1"/><rect x="484" y="392" width="2" height="1"/><rect x="489" y="374" width="1" height="35"/><rect x="487" y="385" width="2" height="1"/><rect x="490" y="396" width="2" height="1"/><rect x="495" y="371" width="1" height="40"/><rect x="493" y="401" width="2" height="1"/><rect x="496" y="378" width="2" height="1"/><rect x="501" y="347" width="1" height="59"/><rect x="499" y="359" width="2" height="1"/><rect x="502" y="403" width="2" height="1"/><rect x="507" y="383" width="1" height="40"/><rect x="505" y="387" width="2" height="1"/><rect x="508" y="422" width="2" height="1"/><rect x="513" y="433" width="1" height="35"/><rect x="511" y="446" width="2" height="1"/><rect x="514" y="461" width="2" height="1"/><rect x="519" y="442" width="1" height="28"/><rect x="517" y="447" width="2" height="1"/><rect x="520" y="461" width="2" height="1"/><rect x="525" y="425" width="1" height="25"/><rect x="523" y="447" width="2" height="1"/><rect x="526" y="431" width="2" height="1"/><rect x="531" y="391" width="1" height="37"/><rect x="529" y="399" width="2" height="1"/><rect x="532" y="416" width="2" height="1"/><rect x="537" y="411" width="1" height="15"/><rect x="535" y="419" width="2" height="1"/><rect x="538" y="419" width="2" height="1"/><rect x="543" y="403" width="1" height="33"/><rect x="541" y="421" width="2" height="1"/><rect x="544" y="427" width="2" height="1"/><rect x="549" y="342" width="1" height="80"/><rect x="547" y="418" width="2" height="1"/><rect x="550" y="342" width="2" height="1"/><rect x="555" y="310" width="1" height="31"/><rect x="553" y="333" width="2" height="1"/><rect x="556" y="332" width="2" height="1"/><rect x="561" y="313" width="1" height="36"/><rect x="559" y="347" width="2" height="1"/><rect x="562" y="340" width="2" height="1"/><rect x="567" y="336" width="1" height="24"/><rect x="565" y="337" width="2" height="1"/><rect x="568" y="340" width="2" height="1"/><rect x="573" y="322" width="1" height="32"/><rect x="571" y="345" width="2" height="1"/><rect x="574" y="334" width="2" height="1"/><rect x="579" y="324" width="1" height="47"/><rect x="577" y="326" width="2" height="1"/><rect x="580" y="370" width="2" height="1"/><rect x="585" y="348" width="1" height="34"/><rect x="583" y="364" width="2" height="1"/><rect x="586" y="378" width="2" height="1"/><rect x="591" y="340" width="1" height="36"/><rect x="589" y="374" width="2" height="1"/><rect x="592" y="359" width="2" height="1"/><rect x="597" y="375" width="1" height="35"/><rect x="595" y="380" width="2" height="1"/><rect x="598" y="409" width="2" height="1"/><rect x="603" y="399" width="1" height="20"/><rect x="601" y="400" width="2" height="1"/><rect x="604" y="409" width="2" height="1"/><rect x="609" y="358" width="1" height="37"/><rect x="607" y="394" width="2" height="1"/><rect x="610" y="362" width="2" height="1"/><rect x="615" y="353" width="1" height="46"/><rect x="613" y="357" width="2" height="1"/><rect x="616" y="388" width="2" height="1"/><rect x="621" y="362" width="1" height="29"/><rect x="619" y="375" width="2" height="1"/><rect x="622" y="376" width="2" height="1"/><rect x="627" y="353" width="1" height="31"/><rect x="625" y="365" width="2" height="1"/><rect x="628" y="364" width="2" height="1"/><rect x="633" y="344" width="1" height="27"/><rect x="631" y="359" width="2" height="1"/><rect x="634" y="356" width="2" height="1"/><rect x="639" y="357" width="1" height="24"/><rect x="637" y="359" width="2" height="1"/><rect x="640" y="367" width="2" height="1"/><rect x="645" y="308" width="1" height="53"/><rect x="643" y="350" width="2" height="1"/><rect x="646" y="308" width="2" height="1"/><rect x="651" y="292" width="1" height="42"/><rect x="649" y="296" width="2" height="1"/><rect x="652" y="332" width="2" height="1"/><rect x="657" y="316" width="1" height="30"/><rect x="655" y="324" width="2" height="1"/><rect x="658" y="340" width="2" height="1"/><rect x="663" y="300" width="1" height="33"/><rect x="661" y="330" width="2" height="1"/><rect x="664" y="304" width="2" height="1"/><rect x="669" y="274" width="1" height="29"/><rect x="667" y="289" width="2" height="1"/><rect x="670" y="295" width="2" height="1"/><rect x="675" y="260" width="1" height="45"/><rect x="673" y="295" width="2" height="1"/><rect x="676" y="262" width="2" height="1"/><rect x="681" y="261" width="1" height="30"/><rect x="679" y="279" width="2" height="1"/><rect x="682" y="269" width="2" height="1"/><rect x="687" y="236" width="1" height="20"/><rect x="685" y="249" width="2" height="1"/><rect x="688" y="248" width="2" height="1"/><rect x="693" y="247" width="1" height="25"/><rect x="691" y="249" width="2" height="1"/><rect x="694" y="259" width="2" height="1"/><rect x="699" y="270" width="1" height="33"/><rect x="697" y="273" width="2" height="1"/><rect x="700" y="298" width="2" height="1"/><rect x="705" y="297" width="1" height="35"/><rect x="703" y="301" width="2" height="1"/><rect x="706" y="328" width="2" height="1"/><rect x="711" y="309" width="1" height="45"/><rect x="709" y="336" width="2" height="1"/><rect x="712" y="315" width="2" height="1"/><rect x="717" y="302" width="1" height="38"/><rect x="715" y="309" width="2" height="1"/><rect x="718" y="339" width="2" height="1"/><rect x="723" y="339" width="1" height="22"/><rect x="721" y="354" width="2" height="1"/><rect x="724" y="342" width="2" height="1"/><rect x="729" y="353" width="1" height="41"/><rect x="727" y="356" width="2" height="1"/><rect x="730" y="385" width="2" height="1"/><rect x="735" y="356" width="1" height="21"/><rect x="733" y="372" width="2" height="1"/><rect x="736" y="358" width="2" height="1"/><rect x="741" y="319" width="1" height="59"/><rect x="739" y="374" width="2" height="1"/><rect x="742" y="319" width="2" height="1"/><rect x="747" y="310" width="1" height="42"/><rect x="745" y="313" width="2" height="1"/><rect x="748" y="342" width="2" height="1"/><rect x="753" y="282" width="1" height="43"/><rect x="751" y="321" width="2" height="1"/><rect x="754" y="282" width="2" height="1"/><rect x="759" y="264" width="1" height="28"/><rect x="757" y="283" width="2" height="1"/><rect x="760" y="277" width="2" height="1"/><rect x="765" y="256" width="1" height="36"/><rect x="763" y="272" width="2" height="1"/><rect x="766" y="262" width="2" height="1"/><rect x="771" y="262" width="1" height="27"/><rect x="769" y="270" width="2" height="1"/><rect x="772" y="278" width="2" height="1"/><rect x="777" y="226" width="1" height="25"/><rect x="775" y="245" width="2" height="1"/><rect x="778" y="226" width="2" height="1"/><rect x="783" y="225" width="1" height="18"/><rect x="781" y="235" width="2" height="1"/><rect x="784" y="239" width="2" height="1"/><rect x="789" y="226" width="1" height="54"/><rect x="787" y="232" width="2" height="1"/><rect x="790" y="278" width="2" height="1"/><rect x="795" y="273" width="1" height="31"/><rect x="793" y="294" width="2" height="1"/><rect x="796" y="274" width="2" height="1"/><rect x="801" y="276" width="1" height="37"/><rect x="799" y="289" width="2" height="1"/><rect x="802" y="289" width="2" height="1"/><rect x="807" y="240" width="1" height="36"/><rect x="805" y="274" width="2" height="1"/><rect x="808" y="242" width="2" height="1"/><rect x="813" y="244" width="1" height="46"/><rect x="811" y="257" width="2" height="1"/><rect x="814" y="283" width="2" height="1"/><rect x="819" y="250" width="1" height="30"/><rect x="817" y="266" width="2" height="1"/><rect x="820" y="272" width="2" height="1"/><rect x="825" y="274" width="1" height="32"/><rect x="823" y="279" width="2" height="1"/><rect x="826" y="305" width="2" height="1"/><rect x="831" y="307" width="1" height="53"/><rect x="829" y="343" width="2" height="1"/><rect x="832" y="307" width="2" height="1"/><rect x="837" y="281" width="1" height="26"/><rect x="835" y="289" width="2" height="1"/><rect x="838" y="289" width="2" height="1"/><rect x="843" y="252" width="1" height="28"/><rect x="841" y="279" width="2" height="1"/><rect x="844" y="262" width="2" height="1"/><rect x="849" y="252" width="1" height="22"/><rect x="847" y="272" width="2" height="1"/><rect x="850" y="255" width="2" height="1"/><rect x="855" y="234" width="1" height="32"/><rect x="853" y="235" width="2" height="1"/><rect x="856" y="265" width="2" height="1"/><rect x="861" y="216" width="1" height="54"/><rect x="859" y="267" width="2" height="1"/><rect x="862" y="223" width="2" height="1"/><rect x="867" y="224" width="1" height="25"/><rect x="865" y="235" width="2" height="1"/><rect x="868" y="235" width="2" height="1"/><rect x="873" y="226" width="1" height="54"/><rect x="871" y="237" width="2" height="1"/><rect x="874" y="276" width="2" height="1"/><rect x="879" y="272" width="1" height="38"/><rect x="877" y="273" width="2" height="1"/><rect x="880" y="309" width="2" height="1"/><rect x="885" y="290" width="1" height="26"/><rect x="883" y="301" width="2" height="1"/><rect x="886" y="314" width="2" height="1"/><rect x="891" y="287" width="1" height="25"/><rect x="889" y="297" width="2" height="1"/><rect x="892" y="297" width="2" height="1"/><rect x="897" y="266" width="1" height="33"/><rect x="895" y="281" width="2" height="1"/><rect x="898" y="288" width="2" height="1"/><rect x="903" y="284" width="1" height="26"/><rect x="901" y="285" width="2" height="1"/><rect x="904" y="298" width="2" height="1"/><rect x="909" y="274" width="1" height="29"/><rect x="907" y="298" width="2" height="1"/><rect x="910" y="285" width="2" height="1"/><rect x="915" y="274" width="1" height="26"/><rect x="913" y="283" width="2" height="1"/><rect x="916" y="293" width="2" height="1"/><rect x="921" y="280" width="1" height="20"/><rect x="919" y="293" width="2" height="1"/><rect x="922" y="286" width="2" height="1"/><rect x="927" y="270" width="1" height="27"/><rect x="925" y="285" width="2" height="1"/><rect x="928" y="274" width="2" height="1"/><rect x="933" y="256" width="1" height="19"/><rect x="931" y="269" width="2" height="1"/><rect x="934" y="262" width="2" height="1"/><rect x="939" y="254" width="1" height="20"/><rect x="937" y="258" width="2" height="1"/><rect x="940" y="264" width="2" height="1"/><rect x="945" y="230" width="1" height="20"/><rect x="943" y="247" width="2" height="1"/><rect x="946" y="236" width="2" height="1"/><rect x="951" y="227" width="1" height="19"/><rect x="949" y="232" width="2" height="1"/><rect x="952" y="228" width="2" height="1"/><rect x="957" y="229" width="1" height="17"/><rect x="955" y="232" width="2" height="1"/><rect x="958" y="244" width="2" height="1"/><rect x="963" y="234" width="1" height="15"/><rect x="961" y="236" width="2" height="1"/><rect x="964" y="247" width="2" height="1"/><rect x="969" y="207" width="1" height="36"/><rect x="967" y="238" width="2" height="1"/><rect x="970" y="208" width="2" height="1"/><rect x="975" y="188" width="1" height="22"/><rect x="973" y="207" width="2" height="1"/><rect x="976" y="207" width="2" height="1"/><rect x="981" y="198" width="1" height="18"/><rect x="979" y="207" width="2" height="1"/><rect x="982" y="204" width="2" height="1"/><rect x="987" y="211" width="1" height="19"/><rect x="985" y="212" width="2" height="1"/><rect x="988" y="225" width="2" height="1"/><rect x="993" y="192" width="1" height="36"/><rect x="991" y="210" width="2" height="1"/><rect x="994" y="221" width="2" height="1"/><rect x="999" y="192" width="1" height="18"/><rect x="997" y="198" width="2" height="1"/><rect x="1000" y="203" width="2" height="1"/><rect x="1005" y="204" width="1" height="21"/><rect x="1003" y="204" width="2" height="1"/><rect x="1006" y="223" width="2" height="1"/><rect x="1011" y="205" width="1" height="28"/><rect x="1009" y="227" width="2" height="1"/><rect x="1012" y="214" width="2" height="1"/><rect x="1017" y="195" width="1" height="29"/><rect x="1015" y="196" width="2" height="1"/><rect x="1018" y="216" width="2" height="1"/><rect x="1023" y="200" width="1" height="29"/><rect x="1021" y="214" width="2" height="1"/><rect x="1024" y="224" width="2" height="1"/><rect x="1029" y="211" width="1" height="14"/><rect x="1027" y="221" width="2" height="1"/><rect x="1030" y="212" width="2" height="1"/><rect x="1035" y="188" width="1" height="33"/><rect x="1033" y="219" width="2" height="1"/><rect x="1036" y="189" width="2" height="1"/><rect x="1041" y="183" width="1" height="18"/><rect x="1039" y="194" width="2" height="1"/><rect x="1042" y="198" width="2" height="1"/><rect x="1047" y="192" width="1" height="26"/><rect x="1045" y="199" width="2" height="1"/><rect x="1048" y="208" width="2" height="1"/><rect x="1053" y="228" width="1" height="29"/><rect x="1051" y="231" width="2" height="1"/><rect x="1054" y="247" width="2" height="1"/><rect x="1059" y="239" width="1" height="18"/><rect x="1057" y="247" width="2" height="1"/><rect x="1060" y="252" width="2" height="1"/><rect x="1065" y="256" width="1" height="22"/><rect x="1063" y="265" width="2" height="1"/><rect x="1066" y="261" width="2" height="1"/><rect x="1071" y="250" width="1" height="24"/><rect x="1069" y="269" width="2" height="1"/><rect x="1072" y="256" width="2" height="1"/><rect x="1077" y="250" width="1" height="36"/><rect x="1075" y="262" width="2" height="1"/><rect x="1078" y="282" width="2" height="1"/><rect x="1083" y="264" width="1" height="27"/><rect x="1081" y="286" width="2" height="1"/><rect x="1084" y="268" width="2" height="1"/><rect x="1089" y="269" width="1" height="14"/><rect x="1087" y="275" width="2" height="1"/><rect x="1090" y="272" width="2" height="1"/><rect x="1095" y="268" width="1" height="14"/><rect x="1093" y="272" width="2" height="1"/><rect x="1096" y="276" width="2" height="1"/><rect x="1101" y="258" width="1" height="25"/><rect x="1099" y="259" width="2" height="1"/><rect x="1102" y="272" width="2" height="1"/><rect x="1107" y="272" width="1" height="63"/><rect x="1105" y="272" width="2" height="1"/><rect x="1108" y="334" width="2" height="1"/><rect x="1113" y="340" width="1" height="47"/><rect x="1111" y="342" width="2" height="1"/><rect x="1114" y="386" width="2" height="1"/></g><rect x="36" y="730" width="1" height="3" fill="#c0c0c0"/><rect x="120" y="730" width="1" height="3" fill="#c0c0c0"/><rect x="210" y="730" width="1" height="3" fill="#c0c0c0"/><rect x="300" y="730" width="1" height="3" fill="#c0c0c0"/><rect x="390" y="730" width="1" height="3" fill="#c0c0c0"/><rect x="480" y="730" width="1" height="3" fill="#c0c0c0"/><rect x="570" y="730" width="1" height="3" fill="#c0c0c0"/><rect x="660" y="730" width="1" height="3" fill="#c0c0c0"/><rect x="750" y="730" width="1" height="3" fill="#c0c0c0"/><rect x="834" y="730" width="1" height="3" fill="#c0c0c0"/><rect x="924" y="730" width="1" height="3" fill="#c0c0c0"/><rect x="996" y="730" width="1" height="3" fill="#c0c0c0"/><rect x="1086" y="730" width="1" height="3" fill="#c0c0c0"/><rect x="1176" y="730" width="1" height="3" fill="#c0c0c0"/><rect x="43" y="728" width="1" height="1" fill="#c8c8c8"/><rect x="53" y="728" width="1" height="1" fill="#c8c8c8"/><rect x="63" y="728" width="1" height="1" fill="#c8c8c8"/><rect x="73" y="728" width="1" height="1" fill="#c8c8c8"/><rect x="83" y="728" width="1" height="1" fill="#c8c8c8"/><rect x="93" y="728" width="1" height="1" fill="#c8c8c8"/><rect x="103" y="728" width="1" height="1" fill="#c8c8c8"/><rect x="113" y="728" width="1" height="1" fill="#c8c8c8"/><rect x="123" y="728" width="1" height="1" fill="#c8c8c8"/><rect x="133" y="728" width="1" height="1" fill="#c8c8c8"/><rect x="143" y="728" width="1" height="1" fill="#c8c8c8"/><rect x="153" y="728" width="1" height="1" fill="#c8c8c8"/><rect x="163" y="728" width="1" height="1" fill="#c8c8c8"/><rect x="173" y="728" width="1" height="1" fill="#c8c8c8"/><rect x="183" y="728" width="1" height="1" fill="#c8c8c8"/><rect x="193" y="728" width="1" height="1" fill="#c8c8c8"/><rect x="203" y="728" width="1" height="1" fill="#c8c8c8"/><rect x="213" y="728" width="1" height="1" fill="#c8c8c8"/><rect x="223" y="728" width="1" height="1" fill="#c8c8c8"/><rect x="233" y="728" width="1" height="1" fill="#c8c8c8"/><rect x="243" y="728" width="1" height="1" fill="#c8c8c8"/><rect x="253" y="728" width="1" height="1" fill="#c8c8c8"/><rect x="263" y="728" width="1" height="1" fill="#c8c8c8"/><rect x="273" y="728" width="1" height="1" fill="#c8c8c8"/><rect x="283" y="728" width="1" height="1" fill="#c8c8c8"/><rect x="293" y="728" width="1" height="1" fill="#c8c8c8"/><rect x="303" y="728" width="1" height="1" fill="#c8c8c8"/><rect x="313" y="728" width="1" height="1" fill="#c8c8c8"/><rect x="323" y="728" width="1" height="1" fill="#c8c8c8"/><rect x="333" y="728" width="1" height="1" fill="#c8c8c8"/><rect x="343" y="728" width="1" height="1" fill="#c8c8c8"/><rect x="353" y="728" width="1" height="1" fill="#c8c8c8"/><rect x="363" y="728" width="1" height="1" fill="#c8c8c8"/><rect x="373" y="728" width="1" height="1" fill="#c8c8c8"/><rect x="383" y="728" width="1" height="1" fill="#c8c8c8"/><rect x="393" y="728" width="1" height="1" fill="#c8c8c8"/><rect x="403" y="728" width="1" height="1" fill="#c8c8c8"/><rect x="413" y="728" width="1" height="1" fill="#c8c8c8"/><rect x="423" y="728" width="1" height="1" fill="#c8c8c8"/><rect x="433" y="728" width="1" height="1" fill="#c8c8c8"/><rect x="443" y="728" width="1" height="1" fill="#c8c8c8"/><rect x="453" y="728" width="1" height="1" fill="#c8c8c8"/><rect x="463" y="728" width="1" height="1" fill="#c8c8c8"/><rect x="473" y="728" width="1" height="1" fill="#c8c8c8"/><rect x="483" y="728" width="1" height="1" fill="#c8c8c8"/><rect x="493" y="728" width="1" height="1" fill="#c8c8c8"/><rect x="503" y="728" width="1" height="1" fill="#c8c8c8"/><rect x="513" y="728" width="1" height="1" fill="#c8c8c8"/><rect x="523" y="728" width="1" height="1" fill="#c8c8c8"/><rect x="533" y="728" width="1" height="1" fill="#c8c8c8"/><rect x="543" y="728" width="1" height="1" fill="#c8c8c8"/><rect x="553" y="728" width="1" height="1" fill="#c8c8c8"/><rect x="563" y="728" width="1" height="1" fill="#c8c8c8"/><rect x="573" y="728" width="1" height="1" fill="#c8c8c8"/><rect x="583" y="728" width="1" height="1" fill="#c8c8c8"/><rect x="593" y="728" width="1" height="1" fill="#c8c8c8"/><rect x="603" y="728" width="1" height="1" fill="#c8c8c8"/><rect x="613" y="728" width="1" height="1" fill="#c8c8c8"/><rect x="623" y="728" width="1" height="1" fill="#c8c8c8"/><rect x="633" y="728" width="1" height="1" fill="#c8c8c8"/><rect x="643" y="728" width="1" height="1" fill="#c8c8c8"/><rect x="653" y="728" width="1" height="1" fill="#c8c8c8"/><rect x="663" y="728" width="1" height="1" fill="#c8c8c8"/><rect x="673" y="728" width="1" height="1" fill="#c8c8c8"/><rect x="683" y="728" width="1" height="1" fill="#c8c8c8"/><rect x="693" y="728" width="1" height="1" fill="#c8c8c8"/><rect x="703" y="728" width="1" height="1" fill="#c8c8c8"/><rect x="713" y="728" width="1" height="1" fill="#c8c8c8"/><rect x="723" y="728" width="1" height="1" fill="#c8c8c8"/><rect x="733" y="728" width="1" height="1" fill="#c8c8c8"/><rect x="743" y="728" width="1" height="1" fill="#c8c8c8"/><rect x="753" y="728" width="1" height="1" fill="#c8c8c8"/><rect x="763" y="728" width="1" height="1" fill="#c8c8c8"/><rect x="773" y="728" width="1" height="1" fill="#c8c8c8"/><rect x="783" y="728" width="1" height="1" fill="#c8c8c8"/><rect x="793" y="728" width="1" height="1" fill="#c8c8c8"/><rect x="803" y="728" width="1" height="1" fill="#c8c8c8"/><rect x="813" y="728" width="1" height="1" fill="#c8c8c8"/><rect x="823" y="728" width="1" height="1" fill="#c8c8c8"/><rect x="833" y="728" width="1" height="1" fill="#c8c8c8"/><rect x="843" y="728" width="1" height="1" fill="#c8c8c8"/><rect x="853" y="728" width="1" height="1" fill="#c8c8c8"/><rect x="863" y="728" width="1" height="1" fill="#c8c8c8"/><rect x="873" y="728" width="1" height="1" fill="#c8c8c8"/><rect x="883" y="728" width="1" height="1" fill="#c8c8c8"/><rect x="893" y="728" width="1" height="1" fill="#c8c8c8"/><rect x="903" y="728" width="1" height="1" fill="#c8c8c8"/><rect x="913" y="728" width="1" height="1" fill="#c8c8c8"/><rect x="923" y="728" width="1" height="1" fill="#c8c8c8"/><rect x="933" y="728" width="1" height="1" fill="#c8c8c8"/><rect x="943" y="728" width="1" height="1" fill="#c8c8c8"/><rect x="953" y="728" width="1" height="1" fill="#c8c8c8"/><rect x="963" y="728" width="1" height="1" fill="#c8c8c8"/><rect x="973" y="728" width="1" height="1" fill="#c8c8c8"/><rect x="983" y="728" width="1" height="1" fill="#c8c8c8"/><rect x="993" y="728" width="1" height="1" fill="#c8c8c8"/><rect x="1003" y="728" width="1" height="1" fill="#c8c8c8"/><rect x="1013" y="728" width="1" height="1" fill="#c8c8c8"/><rect x="1023" y="728" width="1" height="1" fill="#c8c8c8"/><rect x="1033" y="728" width="1" height="1" fill="#c8c8c8"/><rect x="1043" y="728" width="1" height="1" fill="#c8c8c8"/><rect x="1053" y="728" width="1" height="1" fill="#c8c8c8"/><rect x="1063" y="728" width="1" height="1" fill="#c8c8c8"/><rect x="1073" y="728" width="1" height="1" fill="#c8c8c8"/><rect x="1083" y="728" width="1" height="1" fill="#c8c8c8"/><rect x="1093" y="728" width="1" height="1" fill="#c8c8c8"/><rect x="1103" y="728" width="1" height="1" fill="#c8c8c8"/><rect x="1113" y="728" width="1" height="1" fill="#c8c8c8"/><rect x="1123" y="728" width="1" height="1" fill="#c8c8c8"/><rect x="1133" y="728" width="1" height="1" fill="#c8c8c8"/><rect x="1143" y="728" width="1" height="1" fill="#c8c8c8"/><rect x="1153" y="728" width="1" height="1" fill="#c8c8c8"/><rect x="1163" y="728" width="1" height="1" fill="#c8c8c8"/><rect x="1173" y="728" width="1" height="1" fill="#c8c8c8"/><rect x="1183" y="728" width="1" height="1" fill="#c8c8c8"/><rect x="1193" y="728" width="1" height="1" fill="#c8c8c8"/><rect x="1203" y="728" width="1" height="1" fill="#c8c8c8"/><rect x="1213" y="728" width="1" height="1" fill="#c8c8c8"/><rect x="1220" y="128" width="4" height="1" fill="#c8c8c8"/><rect x="1220" y="195" width="4" height="1" fill="#c8c8c8"/><rect x="1220" y="262" width="4" height="1" fill="#c8c8c8"/><rect x="1220" y="328" width="4" height="1" fill="#c8c8c8"/><rect x="1220" y="395" width="4" height="1" fill="#c8c8c8"/><rect x="1220" y="462" width="4" height="1" fill="#c8c8c8"/><rect x="1220" y="529" width="4" height="1" fill="#c8c8c8"/><rect x="1220" y="595" width="4" height="1" fill="#c8c8c8"/><rect x="1220" y="662" width="4" height="1" fill="#c8c8c8"/><rect x="1209" y="106" width="9" height="9" fill="#00e000"/><rect x="1209" y="114" width="9" height="8" fill="#008000"/><rect x="1210" y="115" width="7" height="6" fill="#fff"/><rect x="1211" y="116" width="5" height="4" fill="#000"/><rect x="1212" y="117" width="3" height="2" fill="#fff"/><rect x="1209" y="412" width="9" height="11" fill="#008000"/><rect x="1210" y="413" width="7" height="9" fill="#000"/><circle cx="1213.5" cy="417.5" r="2.6" fill="none" stroke="#fff" stroke-width="1.2" shape-rendering="auto"/><rect x="1209" y="720" width="9" height="5" fill="#00e000"/><rect x="1118" y="727" width="4" height="6" fill="#ffff00"/></svg><div class="dl" style="left:36px">2009-05-25</div><div class="dl" style="left:120px">2009-06-15</div><div class="dl" style="left:210px">2009-07-06</div><div class="dl" style="left:300px">2009-07-27</div><div class="dl" style="left:390px">2009-08-17</div><div class="dl" style="left:480px">2009-09-07</div><div class="dl" style="left:570px">2009-09-28</div><div class="dl" style="left:660px">2009-10-19</div><div class="dl" style="left:750px">2009-11-09</div><div class="dl" style="left:834px">2009-11-30</div><div class="dl" style="left:924px">2009-12-21</div><div class="dl" style="left:996px">2010-01-11</div><div class="dl" style="left:1086px">2010-02-01</div><div class="pl" style="top:120px">2600</div><div class="pl" style="top:187px">2500</div><div class="pl" style="top:254px">2400</div><div class="pl" style="top:320px">2300</div><div class="pl" style="top:387px">2200</div><div class="pl" style="top:454px">2100</div><div class="pl" style="top:521px">2000</div><div class="pl" style="top:587px">1900</div><div class="pl" style="top:654px">1800</div><div class="a" style="left:1220px;top:379px;width:31px;height:13px;background:#fff"></div><div class="a" style="left:1224px;top:378px;font-size:12px;color:#000;letter-spacing:-0.7px">2214</div><div class="a" style="left:33px;top:108px;font-size:9.3px;color:#f0ead8;white-space:pre">FIBONACCI/GALACTIC TRADER(TM)</div><div class="a" style="left:43px;top:127px;font-size:10.6px;color:#ff0000;white-space:pre;line-height:11px">[005] Mars Price Line G 90 N -1</div><div class="a" style="left:43px;top:137px;font-size:10.6px;color:#00ff00;white-space:pre;line-height:11px">[006] Jupiter Price Line G 180 N -1</div><div class="a" style="left:0;top:164px;width:29px;height:385px;border-top:1px solid #fff;border-left:1px solid #fff;border-right:1px solid #a0a0a0;border-bottom:1px solid #a0a0a0"></div><div class="a" style="left:4px;top:169px;width:23px;height:2px;border-top:1px solid #a0a0a0;border-bottom:1px solid #fff"></div><svg class="ic" style="left:10px;top:180px" width="10" height="15" viewBox="0 0 10 15" shape-rendering="crispEdges" ><path d="M0.5 0.5 V12 L3.5 9 L6 14 L8 13 L5.5 8.5 L9.5 8.5 Z" fill="#000" shape-rendering="auto"/></svg><svg class="ic" style="left:6px;top:201px" width="19" height="19" viewBox="0 0 19 19" shape-rendering="crispEdges" ><rect x="8" y="0" width="2" height="19" fill="#000"/><rect x="0" y="8" width="19" height="2" fill="#000"/></svg><div class="a" style="left:3px;top:223px;width:24px;height:24px;border-left:1px solid #a0a0a0;border-top:1px solid #a0a0a0;border-right:1px solid #fff;border-bottom:1px solid #fff;background:repeating-conic-gradient(#e4e4e4 0 25%,#f8f8f8 0 50%) 0 0/2px 2px"></div><svg class="ic" style="left:10px;top:230px" width="12" height="13" viewBox="0 0 12 13" shape-rendering="crispEdges" ><rect x="2" y="1" width="9" height="1" fill="#000"/><rect x="1" y="2" width="1" height="9" fill="#000"/><rect x="2" y="11" width="9" height="1" fill="#000"/><rect x="10" y="1" width="1" height="4" fill="#000"/><rect x="10" y="8" width="1" height="4" fill="#000"/><rect x="5" y="4" width="6" height="1" fill="#000"/><rect x="5" y="8" width="6" height="1" fill="#000"/><rect x="5" y="4" width="1" height="5" fill="#000"/><rect x="2" y="2" width="8" height="2" fill="#ff0000"/><rect x="2" y="4" width="3" height="5" fill="#ff0000"/><rect x="2" y="9" width="8" height="2" fill="#ff0000"/><rect x="8" y="2" width="2" height="2" fill="#fff"/><rect x="8" y="9" width="2" height="2" fill="#fff"/></svg><div class="a" style="left:4px;top:249px;width:23px;height:2px;border-top:1px solid #a0a0a0;border-bottom:1px solid #fff"></div><svg class="ic" style="left:7px;top:256px" width="17" height="18" viewBox="0 0 17 18" shape-rendering="auto"><path d="M1.5 4.5 H7 L9 6.5 V16.5 H1.5 Z" fill="#fff" stroke="#000"/><circle cx="9" cy="6.5" r="4.5" fill="#c8f0ff" stroke="#000" stroke-width="1.3"/><path d="M12 10 L16 14" stroke="#000" stroke-width="2"/><rect x="6" y="5" width="5" height="1" fill="#00a0c0"/><rect x="5" y="7" width="5" height="1" fill="#00a0c0"/></svg><svg class="ic" style="left:7px;top:284px" width="17" height="16" viewBox="0 0 17 16" shape-rendering="auto"><path d="M1.5 3.5 H7 L9 5.5 V15.5 H1.5 Z" fill="#d8d8d8" stroke="#a0a0a0"/><circle cx="9" cy="5.5" r="4.5" fill="#c0c0c0" stroke="#a0a0a0" stroke-width="1.3"/><path d="M12 9 L16 13" stroke="#a0a0a0" stroke-width="2"/></svg><div class="a" style="left:4px;top:303px;width:23px;height:2px;border-top:1px solid #a0a0a0;border-bottom:1px solid #fff"></div><svg class="ic" style="left:7px;top:311px" width="18" height="17" viewBox="0 0 18 17" shape-rendering="auto"><path d="M2 2 H16" stroke="#000" stroke-width="2"/><path d="M2 2 L13 14" stroke="#000" stroke-width="4.5" stroke-linecap="round"/><path d="M3 3 L13 14" stroke="#00d000" stroke-width="2.4"/><circle cx="2.5" cy="2.5" r="1" fill="#fff"/></svg><svg class="ic" style="left:7px;top:335px" width="18" height="17" viewBox="0 0 18 17" shape-rendering="auto"><path d="M2 2 H16" stroke="#000" stroke-width="2"/><path d="M2 2 L13 14" stroke="#000" stroke-width="4.5" stroke-linecap="round"/><path d="M3 3 L13 14" stroke="#0000e0" stroke-width="2.4"/><circle cx="2.5" cy="2.5" r="1" fill="#fff"/></svg><svg class="ic" style="left:7px;top:358px" width="17" height="18" viewBox="0 0 17 18" shape-rendering="auto"><path d="M1.5 17 V2" stroke="#000" stroke-width="2"/><path d="M2 2 L14 14" stroke="#000" stroke-width="4.5" stroke-linecap="round"/><path d="M3 3 L14 14" stroke="#0000e0" stroke-width="2.4"/></svg><svg class="ic" style="left:6px;top:381px" width="18" height="18" viewBox="0 0 18 18" shape-rendering="auto"><path d="M0.5 16 L13 4" stroke="#000" stroke-width="1.2"/><rect x="12.5" y="7.5" width="4" height="9" fill="#00e0f0" stroke="#000"/><path d="M14.5 2 V7" stroke="#e0a000" stroke-width="1.5"/></svg><div class="a" style="left:4px;top:405px;width:23px;height:2px;border-top:1px solid #a0a0a0;border-bottom:1px solid #fff"></div><div class="a" style="left:4px;top:412px;width:23px;height:1px;background:#fff"></div><div class="a" style="left:6px;top:412px;font-size:13px;color:#000;letter-spacing:-0.5px">abc</div><div class="a" style="left:6px;top:435px;font-size:13px;color:#000;letter-spacing:-0.5px">abc</div><svg class="ic" style="left:7px;top:437px" width="17" height="16" viewBox="0 0 17 16" shape-rendering="auto"><path d="M1 1 L16 15 M16 1 L1 15" stroke="#ff0000" stroke-width="1.7"/></svg><div class="a" style="left:11px;top:460px;font-size:14px;font-weight:bold;color:#0000ff">F</div><div class="a" style="left:4px;top:483px;width:23px;height:2px;border-top:1px solid #a0a0a0;border-bottom:1px solid #fff"></div><svg class="ic" style="left:6px;top:490px" width="19" height="19" viewBox="0 0 19 19" shape-rendering="auto"><circle cx="9.5" cy="9.5" r="7.6" fill="none" stroke="#000" stroke-width="2"/></svg><svg class="ic" style="left:5px;top:516px" width="21" height="16" viewBox="0 0 21 16" shape-rendering="auto"><ellipse cx="10.5" cy="7.5" rx="9" ry="6.2" fill="none" stroke="#000" stroke-width="2"/></svg><svg class="ic" style="left:4px;top:538px" width="4" height="7" viewBox="0 0 4 7" shape-rendering="crispEdges" ><path d="M3 0 V7 L0 3.5 Z" fill="#000" shape-rendering="auto"/></svg><div class="a" style="left:1251px;top:103px;width:29px;height:458px;border-top:1px solid #fff;border-left:1px solid #fff;border-right:1px solid #a0a0a0;border-bottom:1px solid #a0a0a0"></div><div class="a" style="left:1255px;top:108px;width:23px;height:2px;border-top:1px solid #a0a0a0;border-bottom:1px solid #fff"></div><svg class="ic" style="left:1256px;top:118px" width="20" height="16" viewBox="0 0 20 16" shape-rendering="auto"><text x="0.5" y="15" font-family="Liberation Sans" font-size="15" fill="#000" font-weight="bold" font-style="" letter-spacing="0" shape-rendering="auto">A</text><path d="M6 1.5 L19 9.5" stroke="#ff0000" stroke-width="1.6" shape-rendering="auto"/></svg><svg class="ic" style="left:1257px;top:141px" width="19" height="19" viewBox="0 0 19 19" shape-rendering="auto"><path d="M1 1 L18 18" stroke="#000" stroke-width="1.8"/><path d="M1 1 L9 17" stroke="#00e000" stroke-width="1.6"/><path d="M1 1 L18 7" stroke="#ff0000" stroke-width="1.8"/></svg><svg class="ic" style="left:1256px;top:167px" width="20" height="14" viewBox="0 0 20 14" shape-rendering="auto"><path d="M1.5 1 A8.5 8 0 0 0 18.5 1" stroke="#000" stroke-width="1.2" fill="none"/><path d="M4 1 A6 5.5 0 0 0 16 1" stroke="#ff00ff" stroke-width="1.4" fill="none"/><path d="M6.5 1 A3.5 3.5 0 0 0 13.5 1" stroke="#00e000" stroke-width="1.3" fill="none"/><path d="M1 13 L11 3" stroke="#000" stroke-width="1.2"/></svg><svg class="ic" style="left:1257px;top:190px" width="19" height="15" viewBox="0 0 19 15" shape-rendering="crispEdges" ><text x="0" y="14" font-family="Liberation Sans" font-size="14" fill="#000080" font-weight="bold" font-style="" letter-spacing="0" shape-rendering="auto">DL</text></svg><svg class="ic" style="left:1256px;top:212px" width="20" height="19" viewBox="0 0 20 19" shape-rendering="auto"><path d="M1.5 9 L10 2 M3 18 L19 2 M13 18 L19 13" stroke="#000" stroke-width="1.3"/><path d="M1.5 9 L11 18" stroke="#606060" stroke-width="1.3"/></svg><svg class="ic" style="left:1257px;top:238px" width="19" height="17" viewBox="0 0 19 17" shape-rendering="auto"><text x="0" y="13" font-family="Liberation Serif" font-size="15" fill="#000" font-weight="normal" font-style="" letter-spacing="0" shape-rendering="auto">I</text><path d="M6 6 L16 15" stroke="#000" stroke-width="1.3"/><rect x="8" y="8" width="10" height="1" fill="#f00"/><rect x="10" y="11" width="8" height="1" fill="#00f"/><rect x="12" y="14" width="6" height="1" fill="#00b000"/></svg><svg class="ic" style="left:1258px;top:262px" width="17" height="16" viewBox="0 0 17 16" shape-rendering="crispEdges" ><rect x="0" y="1" width="17" height="1" fill="#000"/><rect x="0" y="5" width="17" height="1" fill="#000"/><rect x="0" y="9" width="17" height="1" fill="#000"/><rect x="0" y="14" width="17" height="1" fill="#000"/></svg><svg class="ic" style="left:1258px;top:287px" width="17" height="14" viewBox="0 0 17 14" shape-rendering="crispEdges" ><rect x="0" y="0" width="1" height="14" fill="#0000ff"/><rect x="4" y="0" width="1" height="14" fill="#0000ff"/><rect x="9" y="0" width="1" height="14" fill="#0000ff"/><rect x="13" y="0" width="1" height="14" fill="#0000ff"/></svg><svg class="ic" style="left:1258px;top:311px" width="17" height="15" viewBox="0 0 17 15" shape-rendering="crispEdges" ><rect x="0" y="0" width="1" height="15" fill="#ff0000"/><rect x="5" y="0" width="1" height="15" fill="#ff0000"/><rect x="10" y="0" width="1" height="15" fill="#ff0000"/><rect x="15" y="0" width="1" height="15" fill="#ff0000"/></svg><svg class="ic" style="left:1257px;top:333px" width="19" height="18" viewBox="0 0 19 18" shape-rendering="crispEdges" ><rect x="12" y="0" width="6" height="4" fill="#ff0000"/><rect x="13" y="1" width="4" height="2" fill="#fff"/><rect x="14" y="4" width="3" height="4" fill="#ff0000"/><rect x="15" y="5" width="1" height="2" fill="#fff"/><rect x="1" y="12" width="1" height="6" fill="#0000ff"/><rect x="4" y="10" width="1" height="6" fill="#0000ff"/><rect x="7" y="8" width="1" height="6" fill="#0000ff"/><rect x="10" y="6" width="1" height="5" fill="#0000ff"/><rect x="2" y="14" width="2" height="1" fill="#0000ff"/><rect x="5" y="12" width="2" height="1" fill="#0000ff"/><rect x="8" y="10" width="2" height="1" fill="#0000ff"/></svg><svg class="ic" style="left:1257px;top:356px" width="19" height="17" viewBox="0 0 19 17" shape-rendering="auto"><path d="M4 9 L13 1 M1 16 L17 2 M8 16 L18 7" stroke="#000" stroke-width="1.3"/></svg><svg class="ic" style="left:1257px;top:382px" width="19" height="15" viewBox="0 0 19 15" shape-rendering="auto"><path d="M1 14 L10 1 L10 14 Z" fill="none" stroke="#0000ff" stroke-width="1.1"/><path d="M1 14 H10 M10 1 V14" stroke="#ff0000" stroke-dasharray="1 1"/><path d="M10 14 L18 4" stroke="#000" stroke-width="1.2"/></svg><svg class="ic" style="left:1257px;top:406px" width="19" height="16" viewBox="0 0 19 16" shape-rendering="crispEdges" ><rect x="0" y="1" width="18" height="1" fill="#0000ff"/><rect x="0" y="4" width="18" height="1" fill="#0000ff"/><rect x="0" y="11" width="18" height="1" fill="#ff0000"/><rect x="0" y="14" width="18" height="1" fill="#ff0000"/><text x="2" y="14.5" font-family="Liberation Sans" font-size="15" fill="#008000" font-weight="bold" font-style="" letter-spacing="0" shape-rendering="auto">G</text></svg><svg class="ic" style="left:1257px;top:428px" width="19" height="18" viewBox="0 0 19 18" shape-rendering="auto"><path d="M2 16 L17 2 M2 16 L18 6 M2 16 L18 10 M2 16 L12 1 M2 16 L8 2" stroke="#000" stroke-width="1"/><circle cx="3" cy="15" r="2" fill="#000"/></svg><svg class="ic" style="left:1257px;top:455px" width="20" height="15" viewBox="0 0 20 15" shape-rendering="crispEdges" ><text x="0" y="13" font-family="Liberation Sans" font-size="14" fill="#800080" font-weight="normal" font-style="" letter-spacing="0" shape-rendering="auto">G</text><text x="10" y="13" font-family="Liberation Sans" font-size="14" fill="#008000" font-weight="normal" font-style="" letter-spacing="0" shape-rendering="auto">9</text></svg><svg class="ic" style="left:1257px;top:478px" width="20" height="15" viewBox="0 0 20 15" shape-rendering="crispEdges" ><text x="0" y="13" font-family="Liberation Sans" font-size="14" fill="#800080" font-weight="normal" font-style="" letter-spacing="0" shape-rendering="auto">GS</text></svg><svg class="ic" style="left:1257px;top:503px" width="20" height="15" viewBox="0 0 20 15" shape-rendering="crispEdges" ><text x="0" y="13" font-family="Liberation Sans" font-size="14" fill="#000" font-weight="bold" font-style="" letter-spacing="0" shape-rendering="auto">LS</text></svg><svg class="ic" style="left:1258px;top:526px" width="20" height="15" viewBox="0 0 20 15" shape-rendering="crispEdges" ><text x="0" y="13" font-family="Liberation Sans" font-size="14" fill="#000" font-weight="bold" font-style="" letter-spacing="0" shape-rendering="auto">Bi</text></svg><svg class="ic" style="left:1256px;top:549px" width="4" height="7" viewBox="0 0 4 7" shape-rendering="crispEdges" ><path d="M3 0 V7 L0 3.5 Z" fill="#000" shape-rendering="auto"/></svg><div class="a" style="left:29px;top:747px;width:1251px;height:21px;border-top:1px solid #fff;border-left:1px solid #a0a0a0;box-shadow:inset 1px 0 0 #fff"></div><div class="a" style="left:34px;top:750px;width:157px;height:17px;border-top:2px solid #808080;border-left:2px solid #808080;border-bottom:1px solid #fff;border-right:1px solid #fff;background:#f0f0f0"></div><div class="a" style="left:1019px;top:750px;width:140px;height:17px;border-top:2px solid #808080;border-left:1px solid #808080;border-bottom:1px solid #fff;background:#f0f0f0"></div><div class="a" style="left:0;top:769px;width:1280px;height:31px;background:linear-gradient(#3a3b3d 0px,#3a3b3d 1px,#4a4c50 1px,#4a4c50 2px,#95979b 2px,#8a8c90 3px,#76797d 3px,#3c3f44 16px,#05080b 16px,#05080b 31px)"></div><div class="a" style="left:10px;top:766px;width:40px;height:40px;border-radius:50%;background:linear-gradient(#9ab0c4 0%,#5a80a4 30%,#2a5a88 48%,#0a3a6e 50%,#0c4a88 75%,#10a0e0 100%);box-shadow:0 0 0 1px #0a1420,0 0 0 2px #303438"></div><svg class="ic" style="left:16px;top:772px" width="28" height="25" viewBox="0 0 28 25" shape-rendering="auto"><g transform="scale(1.3,1.25)"><path d="M2 4 Q6 2 10 4 L9 10 Q5 8 1 10 Z" fill="#f25022"/><path d="M11 4 Q15 6 20 3 L19 9 Q14 12 10 10 Z" fill="#7fba00"/><path d="M1 11 Q5 9 9 11 L8 17 Q4 15 0 17 Z" fill="#00a4ef"/><path d="M10 11 Q14 13 19 10 L18 16 Q13 19 9 17 Z" fill="#ffb900"/></g></svg><svg class="ic" style="left:65px;top:777px" width="17" height="16" viewBox="0 0 17 16" shape-rendering="auto"><rect x="0.5" y="0.5" width="16" height="14" fill="#3a78d8" stroke="#c8d0d8"/><rect x="1" y="1" width="15" height="6" fill="#6aa0ec"/><rect x="1" y="11" width="15" height="3" fill="#303030"/><circle cx="4" cy="12" r="2" fill="#e8a020"/></svg><svg class="ic" style="left:88px;top:777px" width="17" height="16" viewBox="0 0 17 16" shape-rendering="auto"><rect x="0.5" y="0.5" width="16" height="14" fill="#0c3c9c" stroke="#c8d0d8"/><rect x="3" y="3" width="7" height="4" fill="#a0c0e0"/><rect x="5" y="6" width="7" height="4" fill="#c8d8ec"/><rect x="8" y="9" width="7" height="4" fill="#f0f0f0"/></svg><svg class="ic" style="left:112px;top:776px" width="16" height="17" viewBox="0 0 16 17" shape-rendering="auto"><rect x="1" y="0.5" width="14" height="5" fill="#f0a030"/><rect x="0.5" y="4.5" width="15" height="9" fill="#e8f0f8" stroke="#90b0d0"/><path d="M1 5 L8 10 L15 5" stroke="#5080c0" fill="none"/><rect x="4" y="11" width="8" height="5" fill="#40a080"/><rect x="11" y="6" width="3" height="3" fill="#e04020"/></svg><svg class="ic" style="left:134px;top:776px" width="17" height="17" viewBox="0 0 17 17" shape-rendering="auto"><circle cx="9" cy="9" r="7.5" fill="#2050b0"/><circle cx="10" cy="8" r="4" fill="#60a0e0"/><path d="M2 9 Q1 2 8 1 Q4 4 6 7 Q3 9 5 13 Q9 16 14 13 Q11 17 6 16 Q1 14 2 9 Z" fill="#e86818"/><path d="M4 4 L6 2 L7 5 Z" fill="#f0a030"/></svg><svg class="ic" style="left:157px;top:776px" width="17" height="17" viewBox="0 0 17 17" shape-rendering="auto"><path d="M3 2 H16 V16 H3 Z" fill="#c8e0ec" stroke="#a0b8c8"/><path d="M1 3 L3 2 V16 L1 15 Z" fill="#80b0c8"/><rect x="5" y="5" width="9" height="1" fill="#90b8d0"/><rect x="5" y="7" width="9" height="1" fill="#90b8d0"/><rect x="5" y="9" width="9" height="1" fill="#90b8d0"/><rect x="5" y="11" width="9" height="1" fill="#90b8d0"/><rect x="5" y="13" width="9" height="1" fill="#90b8d0"/><rect x="4" y="0" width="1" height="3" fill="#606060"/><rect x="6" y="0" width="1" height="3" fill="#606060"/><rect x="8" y="0" width="1" height="3" fill="#606060"/><rect x="10" y="0" width="1" height="3" fill="#606060"/><rect x="12" y="0" width="1" height="3" fill="#606060"/><rect x="14" y="0" width="1" height="3" fill="#606060"/></svg><svg class="ic" style="left:181px;top:777px" width="14" height="17" viewBox="0 0 14 17" shape-rendering="auto"><path d="M1 2 H6 L7 4 H13 V16 H1 Z" fill="#e8d890"/><path d="M1 5 H13 V16 H1 Z" fill="#f4e4a0" stroke="#c8b060" stroke-width="0.6"/><rect x="9" y="11" width="1.5" height="3" fill="#4080c0"/></svg><svg class="ic" style="left:203px;top:777px" width="16" height="17" viewBox="0 0 16 17" shape-rendering="auto"><path d="M1 2 H15 L13 16 H3 Z" fill="#a8c0d8" stroke="#d0dce8"/><ellipse cx="8" cy="2.5" rx="7" ry="2" fill="#c8d8e8" stroke="#e0e8f0"/><circle cx="8" cy="9" r="3" fill="#6890c8"/></svg><svg class="ic" style="left:227px;top:776px" width="15" height="17" viewBox="0 0 15 17" shape-rendering="auto"><path d="M7.5 1 L14 8 L7.5 16 L1 8 Z" fill="#202020"/><circle cx="7.5" cy="8.5" r="5" fill="#e02020"/><path d="M7.5 8.5 L7.5 3.5 A5 5 0 0 1 12.5 8.5 Z" fill="#f0e020"/><path d="M7.5 8.5 L12.5 8.5 A5 5 0 0 1 7.5 13.5 Z" fill="#e020e0"/><path d="M7.5 8.5 L7.5 13.5 A5 5 0 0 1 2.5 8.5 Z" fill="#2040e0"/><path d="M7.5 8.5 L2.5 8.5 A5 5 0 0 1 7.5 3.5 Z" fill="#20c040"/></svg><svg class="ic" style="left:249px;top:777px" width="17" height="17" viewBox="0 0 17 17" shape-rendering="auto"><circle cx="8.5" cy="8" r="7.5" fill="#d0d0d0"/><circle cx="8.5" cy="7.5" r="6.5" fill="#d83030"/><path d="M8.5 2 Q11 6 11 8 Q11 11 8.5 11 Q6 11 6 8 Q6 6 8.5 2 Z" fill="#f0f0f0"/><path d="M3 12 Q8.5 16 14 12 V14 Q8.5 17 3 14 Z" fill="#e8e8e8"/></svg><svg class="ic" style="left:272px;top:776px" width="17" height="17" viewBox="0 0 17 17" shape-rendering="auto"><path d="M8 1 L10 4 L9 8 L16 5 L11 11 L9 12 L8 16 L7 12 L1 7 L7 8 L6 4 Z" fill="#1010f0"/></svg><svg class="ic" style="left:297px;top:776px" width="15" height="17" viewBox="0 0 15 17" shape-rendering="auto"><rect x="2" y="1" width="10" height="11" rx="3" fill="#f0f0e0"/><rect x="3" y="3" width="8" height="8" fill="#e8e040"/><text x="4" y="10" font-size="8" font-family="Liberation Sans" font-weight="bold" fill="#000">R</text><path d="M1 15 H12 M3 12 V15 M10 12 V15" stroke="#8080a0"/><circle cx="13" cy="14" r="2" fill="#808080"/></svg><svg class="ic" style="left:318px;top:776px" width="17" height="17" viewBox="0 0 17 17" shape-rendering="auto"><text x="0" y="8" font-size="9" font-family="Liberation Serif" font-weight="bold" fill="#e01010">MS</text><path d="M1 9 L15 9 L14 14 L2 14 Z" fill="#101010"/><rect x="4" y="10" width="2" height="2" fill="#40c0c0"/><rect x="9" y="11" width="2" height="2" fill="#f0f0f0"/><rect x="13" y="12" width="2" height="2" fill="#e02020"/></svg><svg class="ic" style="left:341px;top:776px" width="17" height="17" viewBox="0 0 17 17" shape-rendering="auto"><circle cx="8.5" cy="8.5" r="7.5" fill="#d83a2a"/><path d="M8.5 8.5 L15.2 12 A7.5 7.5 0 0 1 4.5 15 Z" fill="#f0c020"/><path d="M8.5 8.5 L4.5 15 A7.5 7.5 0 0 1 1.5 6 Z" fill="#40a040"/><circle cx="8.5" cy="8.5" r="3.6" fill="#f0f0f0"/><circle cx="8.5" cy="8.5" r="2.7" fill="#3a78d8"/></svg><svg class="ic" style="left:364px;top:776px" width="17" height="18" viewBox="0 0 17 18" shape-rendering="auto"><circle cx="9" cy="9.5" r="6" fill="#2a90e0"/><circle cx="9" cy="9.5" r="3" fill="#e8f4fc"/><rect x="6" y="9" width="7" height="1.5" fill="#2a90e0"/><path d="M2 16 Q0 12 6 6 Q13 0 16 2 Q17 4 13 8" stroke="#f0b020" stroke-width="1.6" fill="none"/></svg><svg class="ic" style="left:387px;top:776px" width="17" height="17" viewBox="0 0 17 17" shape-rendering="auto"><rect x="0.5" y="0.5" width="16" height="16" fill="#2080f0"/><rect x="2" y="2" width="13" height="13" fill="#90d0d0"/><circle cx="8.5" cy="8.5" r="5.5" fill="#f08020"/><path d="M6.5 5.5 L12 8.5 L6.5 11.5 Z" fill="#fff"/></svg><div class="a" style="left:474px;top:772px;width:156px;height:26px;border:1px solid #80848a;border-radius:3px;box-shadow:inset 0 0 0 1px #2a2c30;background:linear-gradient(#74787d,#4e5257 48%,#1e2125 50%,#24272b)"></div><svg class="ic" style="left:482px;top:776px" width="16" height="16" viewBox="0 0 16 16" shape-rendering="auto"><rect x="0" y="0" width="16" height="16" fill="#0a0c14"/><ellipse cx="9" cy="8" rx="6" ry="4.5" fill="#7aa8e0"/><ellipse cx="9" cy="7" rx="4" ry="2" fill="#d8e8f8"/><path d="M0 15 L16 3" stroke="#3060ff" stroke-width="1.2"/></svg><div class="a" style="left:505px;top:778px;font-size:12px;color:#fff;white-space:pre">Notowania 3</div><div class="a" style="left:633px;top:772px;width:157px;height:26px;border:1px solid #5a5e63;border-radius:3px;box-shadow:inset 0 0 0 1px #1a1c1f;background:linear-gradient(#3a3d42,#2a2d31 48%,#0c0e10 50%,#101215)"></div><svg class="ic" style="left:642px;top:776px" width="16" height="17" viewBox="0 0 16 17" shape-rendering="crispEdges" ><rect x="0" y="0" width="10" height="9" fill="#fff"/><rect x="1" y="1" width="8" height="7" fill="#2030f0"/><rect x="3" y="2" width="4" height="2" fill="#fff"/><rect x="3" y="5" width="4" height="2" fill="#fff"/><rect x="12" y="1" width="2" height="2" fill="#40e0e0"/><rect x="1" y="12" width="3" height="3" fill="#ff00ff"/><rect x="6" y="15" width="2" height="2" fill="#00e000"/><rect x="12" y="10" width="1" height="1" fill="#fff"/></svg><div class="a" style="left:662px;top:778px;font-size:12px;color:#fff;white-space:pre">Fibonacci/Galactic ...</div><div class="a" style="left:1055px;top:777px;font-size:12px;color:#e8e8e8">PL</div><svg class="ic" style="left:1076px;top:776px" width="16" height="15" viewBox="0 0 16 15" shape-rendering="auto"><path d="M9 0 Q9 3 6 4" stroke="#c0c0c0" fill="none"/><rect x="0.5" y="5.5" width="15" height="9" rx="1" fill="#d8d8d8" stroke="#909090"/><rect x="2" y="7" width="2" height="1" fill="#707070"/><rect x="2" y="9" width="2" height="1" fill="#707070"/><rect x="2" y="11" width="2" height="1" fill="#707070"/><rect x="5" y="7" width="2" height="1" fill="#707070"/><rect x="5" y="9" width="2" height="1" fill="#707070"/><rect x="5" y="11" width="2" height="1" fill="#707070"/><rect x="8" y="7" width="2" height="1" fill="#707070"/><rect x="8" y="9" width="2" height="1" fill="#707070"/><rect x="8" y="11" width="2" height="1" fill="#707070"/><rect x="11" y="7" width="2" height="1" fill="#707070"/><rect x="11" y="9" width="2" height="1" fill="#707070"/><rect x="11" y="11" width="2" height="1" fill="#707070"/></svg><svg class="ic" style="left:1103px;top:779px" width="8" height="10" viewBox="0 0 8 10" shape-rendering="auto"><path d="M6 1 L1.5 5 L6 9" stroke="#e0e0e0" stroke-width="2" fill="none"/></svg><svg class="ic" style="left:1117px;top:775px" width="16" height="16" viewBox="0 0 16 16" shape-rendering="auto"><rect x="0" y="0" width="16" height="16" fill="#050a10"/><ellipse cx="9" cy="8" rx="6" ry="4" fill="#a8c8e8"/><path d="M0 15 L16 2" stroke="#2050ff" stroke-width="1.4"/></svg><svg class="ic" style="left:1135px;top:775px" width="17" height="17" viewBox="0 0 17 17" shape-rendering="auto"><ellipse cx="7" cy="7" rx="7" ry="6.5" fill="#80c040"/><circle cx="11" cy="11" r="5" fill="#f0f0f0" stroke="#606060"/><path d="M11 8 V11 H13" stroke="#000" fill="none"/></svg><svg class="ic" style="left:1153px;top:775px" width="16" height="16" viewBox="0 0 16 16" shape-rendering="auto"><rect x="0" y="0" width="16" height="16" fill="#1a3070"/><path d="M3 11 Q8 15 13 11 L12 13 Q8 16 4 13 Z" fill="#e04040"/><path d="M8 2 V9 M5 5 H11" stroke="#80c0ff" stroke-width="2"/></svg><svg class="ic" style="left:1182px;top:775px" width="15" height="16" viewBox="0 0 15 16" shape-rendering="auto"><path d="M1 6 H7 V10 Q7 12 4 12 Q1 12 1 10 Z" fill="#f0f0f0" stroke="#303030"/><path d="M3 2 V6 M5 2 V6" stroke="#e0c040" stroke-width="1.2"/><path d="M4 12 V15" stroke="#303030"/><rect x="8.5" y="2.5" width="6" height="12" fill="#b8e0b0" stroke="#f0f0f0"/></svg><svg class="ic" style="left:1199px;top:775px" width="17" height="17" viewBox="0 0 17 17" shape-rendering="auto"><rect x="0.5" y="0.5" width="9" height="8" fill="#3070c0" stroke="#e0e8f0"/><rect x="4.5" y="3.5" width="9" height="8" fill="#3070c0" stroke="#e0e8f0"/><circle cx="12" cy="12" r="4.5" fill="#30a040"/><path d="M9 11 Q12 9 15 12" stroke="#2060d0" stroke-width="2" fill="none"/></svg><svg class="ic" style="left:1217px;top:775px" width="15" height="16" viewBox="0 0 15 16" shape-rendering="auto"><path d="M1 5 H4 L8 1 V15 L4 11 H1 Z" fill="#e0e0e0" stroke="#a0a0a0" stroke-width="0.6"/><path d="M10 5 Q12 8 10 11 M12 3 Q15 8 12 13" stroke="#40c040" stroke-width="1.2" fill="none"/></svg><div class="a" style="left:1240px;top:778px;font-size:11.4px;color:#fff">16:44</div><div class="a" style="left:1147px;top:724px;width:133px;height:46px;border:1px solid #767676;border-radius:3px;background:linear-gradient(#ffffff,#e4e5f0);box-shadow:1px 1px 2px rgba(0,0,0,0.3)"></div><svg class="ic" style="left:1156px;top:734px" width="31" height="26" viewBox="0 0 31 26" shape-rendering="crispEdges"><rect x="0.5" y="0.5" width="30" height="25" rx="1" fill="#e8f4fa" stroke="#a0a8b0"/><rect x="2" y="2" width="27" height="5" fill="#7cc4e6"/><rect x="3" y="8" width="3" height="3" fill="#3aa0d8"/><rect x="3" y="12" width="3" height="3" fill="#3aa0d8"/><rect x="3" y="16" width="3" height="3" fill="#3aa0d8"/><rect x="3" y="20" width="3" height="3" fill="#3aa0d8"/><rect x="7" y="8" width="3" height="3" fill="#3aa0d8"/><rect x="7" y="12" width="3" height="3" fill="#3aa0d8"/><rect x="7" y="16" width="3" height="3" fill="#3aa0d8"/><rect x="7" y="20" width="3" height="3" fill="#3aa0d8"/><rect x="11" y="8" width="3" height="3" fill="#3aa0d8"/><rect x="11" y="12" width="3" height="3" fill="#3aa0d8"/><rect x="11" y="16" width="3" height="3" fill="#3aa0d8"/><rect x="11" y="20" width="3" height="3" fill="#3aa0d8"/><rect x="15" y="8" width="3" height="3" fill="#3aa0d8"/><rect x="15" y="12" width="3" height="3" fill="#3aa0d8"/><rect x="15" y="16" width="3" height="3" fill="#3aa0d8"/><rect x="15" y="20" width="3" height="3" fill="#3aa0d8"/><rect x="19" y="8" width="3" height="3" fill="#3aa0d8"/><rect x="19" y="12" width="3" height="3" fill="#3aa0d8"/><rect x="19" y="16" width="3" height="3" fill="#3aa0d8"/><rect x="19" y="20" width="3" height="3" fill="#3aa0d8"/><rect x="23" y="8" width="3" height="3" fill="#3aa0d8"/><rect x="23" y="12" width="3" height="3" fill="#3aa0d8"/><rect x="23" y="16" width="3" height="3" fill="#3aa0d8"/><rect x="27" y="8" width="3" height="3" fill="#3aa0d8"/><rect x="27" y="12" width="3" height="3" fill="#3aa0d8"/><rect x="27" y="16" width="3" height="3" fill="#3aa0d8"/></svg><div class="a" style="left:1199px;top:732px;font-size:11.6px;color:#5a5048;line-height:16px;white-space:pre">7 lutego 2010<br>niedziela</div>
</body></html>
